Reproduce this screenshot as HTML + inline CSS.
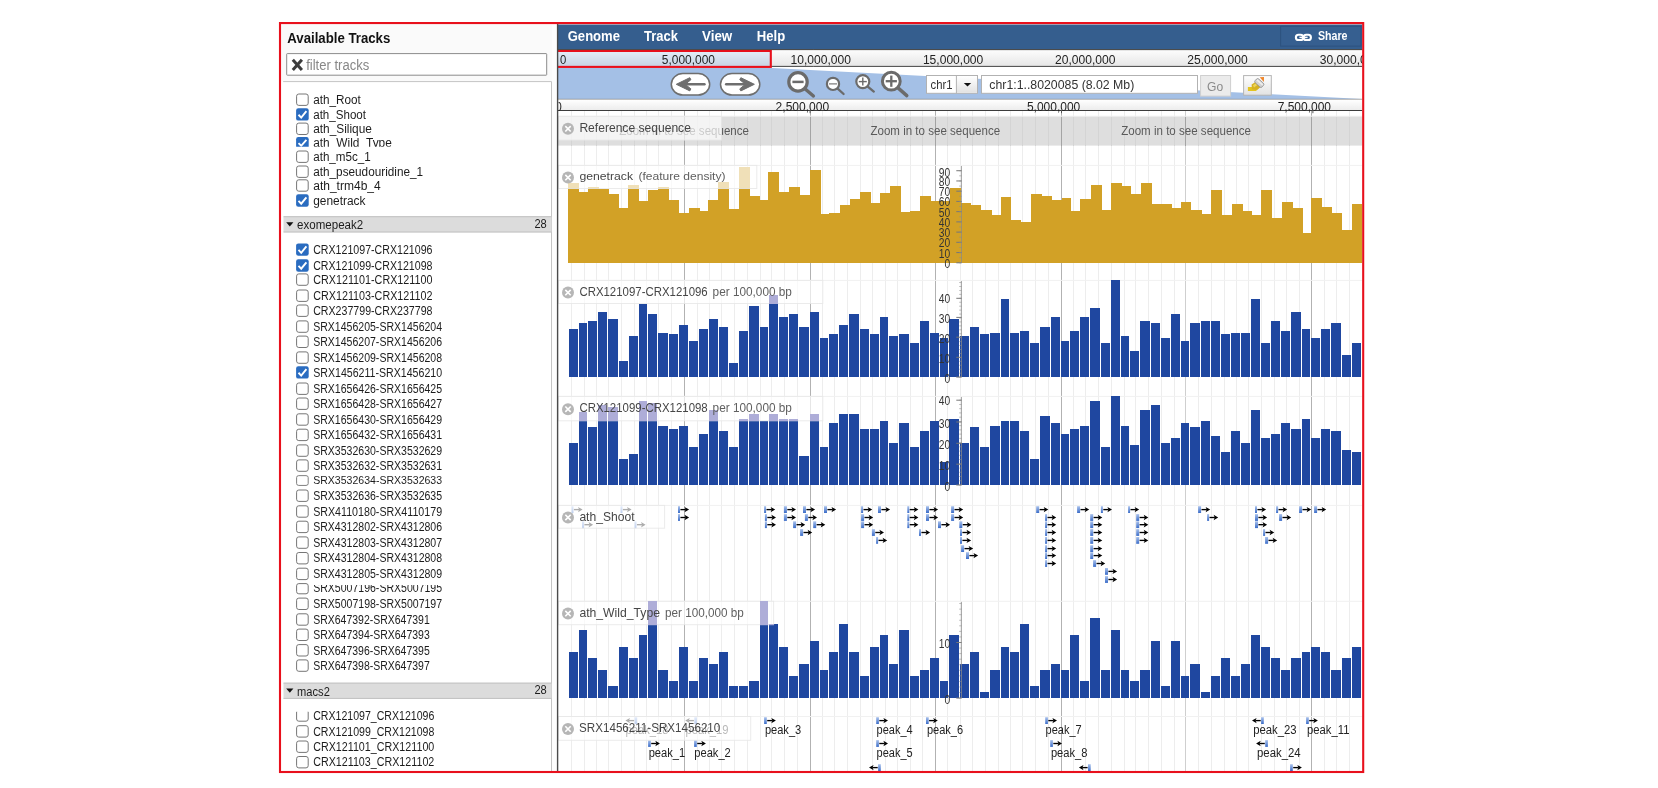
<!DOCTYPE html>
<html lang="en"><head><meta charset="utf-8"><title>JBrowse</title>
<style>
html,body{margin:0;padding:0;background:#fff;overflow:hidden}
body{width:1658px;height:788px}
svg{display:block;position:absolute;left:0;top:0;will-change:transform;-webkit-font-smoothing:antialiased}
svg text{font-family:"Liberation Sans",sans-serif;white-space:pre}
</style></head><body>
<svg width="1658" height="788" viewBox="0 0 1658 788">
<rect x="281" y="24.5" width="277" height="747" fill="#fafafa" />
<text x="287.3" y="43" font-size="14" fill="#111" textLength="103" lengthAdjust="spacingAndGlyphs" font-weight="bold" >Available Tracks</text>
<rect x="286.7" y="53.6" width="260" height="21.6" fill="#fff" stroke="#8c8c8c" stroke-width="1" rx="0.6"/>
<path d="M292.8 59.8 L301.9 70 M301.9 59.8 L292.8 70" stroke="#3c3c3c" stroke-width="3" fill="none"/>
<text x="306.2" y="69.6" font-size="14" fill="#878787" textLength="63" lengthAdjust="spacingAndGlyphs" >filter tracks</text>
<rect x="281" y="81.6" width="270.5" height="690" fill="#fff" />
<line x1="283.2" y1="81.6" x2="551.5" y2="81.6" stroke="#c4c4c4" stroke-width="1" />
<line x1="551.5" y1="81.6" x2="551.5" y2="771.5" stroke="#c4c4c4" stroke-width="1" />
<rect x="296.6" y="94" width="11.6" height="11.4" rx="2.2" fill="#fff" stroke="#767676" stroke-width="1"/>
<text x="313.2" y="103.9" font-size="12" fill="#1c1c1c" textLength="47.57" lengthAdjust="spacingAndGlyphs" >ath_Root</text>
<rect x="296.1" y="108.2" width="12.6" height="12.4" rx="2.2" fill="#2a6cc0"/>
<path d="M298.5 114.77 L301.2 117.62 L306.4 111.18" stroke="#fff" stroke-width="1.9" fill="none"/>
<text x="313.2" y="118.6" font-size="12" fill="#1c1c1c" textLength="52.82" lengthAdjust="spacingAndGlyphs" >ath_Shoot</text>
<rect x="296.6" y="123.1" width="11.6" height="11.4" rx="2.2" fill="#fff" stroke="#767676" stroke-width="1"/>
<text x="313.2" y="133" font-size="12" fill="#1c1c1c" textLength="58.69" lengthAdjust="spacingAndGlyphs" >ath_Silique</text>
<clipPath id="cw"><rect x="290" y="130" width="200" height="16.7"/></clipPath><g clip-path="url(#cw)">
<rect x="296.1" y="137.1" width="12.6" height="11.4" rx="2.2" fill="#2a6cc0"/>
<path d="M298.5 143.14 L301.2 145.76 L306.4 139.84" stroke="#fff" stroke-width="1.9" fill="none"/>
<text x="313.2" y="147.4" font-size="12" fill="#1c1c1c" textLength="78.64" lengthAdjust="spacingAndGlyphs" >ath_Wild_Type</text>
</g>
<rect x="296.6" y="151" width="11.6" height="11.4" rx="2.2" fill="#fff" stroke="#767676" stroke-width="1"/>
<text x="313.2" y="160.9" font-size="12" fill="#1c1c1c" textLength="57.56" lengthAdjust="spacingAndGlyphs" >ath_m5c_1</text>
<rect x="296.6" y="166" width="11.6" height="11.4" rx="2.2" fill="#fff" stroke="#767676" stroke-width="1"/>
<text x="313.2" y="175.9" font-size="12" fill="#1c1c1c" textLength="109.93" lengthAdjust="spacingAndGlyphs" >ath_pseudouridine_1</text>
<rect x="296.6" y="179.8" width="11.6" height="11.4" rx="2.2" fill="#fff" stroke="#767676" stroke-width="1"/>
<text x="313.2" y="189.7" font-size="12" fill="#1c1c1c" textLength="67.53" lengthAdjust="spacingAndGlyphs" >ath_trm4b_4</text>
<rect x="296.1" y="194.3" width="12.6" height="12.4" rx="2.2" fill="#2a6cc0"/>
<path d="M298.5 200.87 L301.2 203.72 L306.4 197.28" stroke="#fff" stroke-width="1.9" fill="none"/>
<text x="313.2" y="204.7" font-size="12" fill="#1c1c1c" textLength="52.34" lengthAdjust="spacingAndGlyphs" >genetrack</text>
<rect x="283.5" y="216.4" width="268" height="15.9" fill="#dcdcdc" />
<line x1="283.5" y1="216.7" x2="551.5" y2="216.7" stroke="#c0c0c0" stroke-width="1" />
<line x1="283.5" y1="232" x2="551.5" y2="232" stroke="#c0c0c0" stroke-width="1" />
<path d="M286.2 222.2 h7.2 l-3.6 4.2 z" fill="#111"/>
<text x="297.1" y="228.7" font-size="12" fill="#1c1c1c" textLength="66.06" lengthAdjust="spacingAndGlyphs" >exomepeak2</text>
<text x="546.8" y="228.1" font-size="12" fill="#1c1c1c" textLength="12.34" lengthAdjust="spacingAndGlyphs" text-anchor="end" >28</text>
<rect x="296.1" y="243.4" width="12.6" height="12.4" rx="2.2" fill="#2a6cc0"/>
<path d="M298.5 249.97 L301.2 252.82 L306.4 246.38" stroke="#fff" stroke-width="1.9" fill="none"/>
<text x="313.2" y="253.8" font-size="12" fill="#1c1c1c" textLength="119.28" lengthAdjust="spacingAndGlyphs" >CRX121097-CRX121096</text>
<rect x="296.1" y="259.3" width="12.6" height="12.4" rx="2.2" fill="#2a6cc0"/>
<path d="M298.5 265.87 L301.2 268.72 L306.4 262.28" stroke="#fff" stroke-width="1.9" fill="none"/>
<text x="313.2" y="269.7" font-size="12" fill="#1c1c1c" textLength="119.28" lengthAdjust="spacingAndGlyphs" >CRX121099-CRX121098</text>
<rect x="296.6" y="273.9" width="11.6" height="11.4" rx="2.2" fill="#fff" stroke="#767676" stroke-width="1"/>
<text x="313.2" y="283.8" font-size="12" fill="#1c1c1c" textLength="119.28" lengthAdjust="spacingAndGlyphs" >CRX121101-CRX121100</text>
<rect x="296.6" y="290" width="11.6" height="11.4" rx="2.2" fill="#fff" stroke="#767676" stroke-width="1"/>
<text x="313.2" y="299.9" font-size="12" fill="#1c1c1c" textLength="119.28" lengthAdjust="spacingAndGlyphs" >CRX121103-CRX121102</text>
<rect x="296.6" y="305" width="11.6" height="11.4" rx="2.2" fill="#fff" stroke="#767676" stroke-width="1"/>
<text x="313.2" y="314.9" font-size="12" fill="#1c1c1c" textLength="119.28" lengthAdjust="spacingAndGlyphs" >CRX237799-CRX237798</text>
<rect x="296.6" y="320.9" width="11.6" height="11.4" rx="2.2" fill="#fff" stroke="#767676" stroke-width="1"/>
<text x="313.2" y="330.8" font-size="12" fill="#1c1c1c" textLength="128.88" lengthAdjust="spacingAndGlyphs" >SRX1456205-SRX1456204</text>
<rect x="296.6" y="336.1" width="11.6" height="11.4" rx="2.2" fill="#fff" stroke="#767676" stroke-width="1"/>
<text x="313.2" y="346" font-size="12" fill="#1c1c1c" textLength="128.88" lengthAdjust="spacingAndGlyphs" >SRX1456207-SRX1456206</text>
<rect x="296.6" y="351.9" width="11.6" height="11.4" rx="2.2" fill="#fff" stroke="#767676" stroke-width="1"/>
<text x="313.2" y="361.8" font-size="12" fill="#1c1c1c" textLength="128.88" lengthAdjust="spacingAndGlyphs" >SRX1456209-SRX1456208</text>
<rect x="296.1" y="366.2" width="12.6" height="12.4" rx="2.2" fill="#2a6cc0"/>
<path d="M298.5 372.77 L301.2 375.62 L306.4 369.18" stroke="#fff" stroke-width="1.9" fill="none"/>
<text x="313.2" y="376.6" font-size="12" fill="#1c1c1c" textLength="128.88" lengthAdjust="spacingAndGlyphs" >SRX1456211-SRX1456210</text>
<rect x="296.6" y="383" width="11.6" height="11.4" rx="2.2" fill="#fff" stroke="#767676" stroke-width="1"/>
<text x="313.2" y="392.9" font-size="12" fill="#1c1c1c" textLength="128.88" lengthAdjust="spacingAndGlyphs" >SRX1656426-SRX1656425</text>
<rect x="296.6" y="398" width="11.6" height="11.4" rx="2.2" fill="#fff" stroke="#767676" stroke-width="1"/>
<text x="313.2" y="407.9" font-size="12" fill="#1c1c1c" textLength="128.88" lengthAdjust="spacingAndGlyphs" >SRX1656428-SRX1656427</text>
<rect x="296.6" y="413.8" width="11.6" height="11.4" rx="2.2" fill="#fff" stroke="#767676" stroke-width="1"/>
<text x="313.2" y="423.7" font-size="12" fill="#1c1c1c" textLength="128.88" lengthAdjust="spacingAndGlyphs" >SRX1656430-SRX1656429</text>
<rect x="296.6" y="429.2" width="11.6" height="11.4" rx="2.2" fill="#fff" stroke="#767676" stroke-width="1"/>
<text x="313.2" y="439.1" font-size="12" fill="#1c1c1c" textLength="128.88" lengthAdjust="spacingAndGlyphs" >SRX1656432-SRX1656431</text>
<rect x="296.6" y="444.9" width="11.6" height="11.4" rx="2.2" fill="#fff" stroke="#767676" stroke-width="1"/>
<text x="313.2" y="454.8" font-size="12" fill="#1c1c1c" textLength="128.88" lengthAdjust="spacingAndGlyphs" >SRX3532630-SRX3532629</text>
<rect x="296.6" y="459.9" width="11.6" height="11.4" rx="2.2" fill="#fff" stroke="#767676" stroke-width="1"/>
<text x="313.2" y="469.8" font-size="12" fill="#1c1c1c" textLength="128.88" lengthAdjust="spacingAndGlyphs" >SRX3532632-SRX3532631</text>
<g transform="translate(0,475.2) scale(1,0.86) translate(0,-475.2)">
<rect x="296.6" y="475.7" width="11.6" height="11.4" rx="2.2" fill="#fff" stroke="#767676" stroke-width="1"/>
<text x="313.2" y="485.6" font-size="12" fill="#1c1c1c" textLength="128.88" lengthAdjust="spacingAndGlyphs" >SRX3532634-SRX3532633</text>
</g>
<rect x="296.6" y="490" width="11.6" height="11.4" rx="2.2" fill="#fff" stroke="#767676" stroke-width="1"/>
<text x="313.2" y="499.9" font-size="12" fill="#1c1c1c" textLength="128.88" lengthAdjust="spacingAndGlyphs" >SRX3532636-SRX3532635</text>
<rect x="296.6" y="505.8" width="11.6" height="11.4" rx="2.2" fill="#fff" stroke="#767676" stroke-width="1"/>
<text x="313.2" y="515.7" font-size="12" fill="#1c1c1c" textLength="128.88" lengthAdjust="spacingAndGlyphs" >SRX4110180-SRX4110179</text>
<rect x="296.6" y="521.2" width="11.6" height="11.4" rx="2.2" fill="#fff" stroke="#767676" stroke-width="1"/>
<text x="313.2" y="531.1" font-size="12" fill="#1c1c1c" textLength="128.88" lengthAdjust="spacingAndGlyphs" >SRX4312802-SRX4312806</text>
<rect x="296.6" y="536.9" width="11.6" height="11.4" rx="2.2" fill="#fff" stroke="#767676" stroke-width="1"/>
<text x="313.2" y="546.8" font-size="12" fill="#1c1c1c" textLength="128.88" lengthAdjust="spacingAndGlyphs" >SRX4312803-SRX4312807</text>
<rect x="296.6" y="552.5" width="11.6" height="11.4" rx="2.2" fill="#fff" stroke="#767676" stroke-width="1"/>
<text x="313.2" y="562.4" font-size="12" fill="#1c1c1c" textLength="128.88" lengthAdjust="spacingAndGlyphs" >SRX4312804-SRX4312808</text>
<rect x="296.6" y="568.2" width="11.6" height="11.4" rx="2.2" fill="#fff" stroke="#767676" stroke-width="1"/>
<text x="313.2" y="578.1" font-size="12" fill="#1c1c1c" textLength="128.88" lengthAdjust="spacingAndGlyphs" >SRX4312805-SRX4312809</text>
<rect x="296.6" y="583.6" width="11.6" height="10.2" rx="2.2" fill="#fff" stroke="#767676" stroke-width="1"/>
<clipPath id="c5"><rect x="290" y="585" width="200" height="12"/></clipPath><g clip-path="url(#c5)">
<text x="313.2" y="591.7" font-size="12" fill="#1c1c1c" textLength="128.88" lengthAdjust="spacingAndGlyphs" >SRX5007196-SRX5007195</text>
</g>
<rect x="296.6" y="598.1" width="11.6" height="11.4" rx="2.2" fill="#fff" stroke="#767676" stroke-width="1"/>
<text x="313.2" y="608" font-size="12" fill="#1c1c1c" textLength="128.88" lengthAdjust="spacingAndGlyphs" >SRX5007198-SRX5007197</text>
<rect x="296.6" y="613.8" width="11.6" height="11.4" rx="2.2" fill="#fff" stroke="#767676" stroke-width="1"/>
<text x="313.2" y="623.7" font-size="12" fill="#1c1c1c" textLength="116.53" lengthAdjust="spacingAndGlyphs" >SRX647392-SRX647391</text>
<rect x="296.6" y="629.1" width="11.6" height="11.4" rx="2.2" fill="#fff" stroke="#767676" stroke-width="1"/>
<text x="313.2" y="639" font-size="12" fill="#1c1c1c" textLength="116.53" lengthAdjust="spacingAndGlyphs" >SRX647394-SRX647393</text>
<rect x="296.6" y="644.6" width="11.6" height="11.4" rx="2.2" fill="#fff" stroke="#767676" stroke-width="1"/>
<text x="313.2" y="654.5" font-size="12" fill="#1c1c1c" textLength="116.53" lengthAdjust="spacingAndGlyphs" >SRX647396-SRX647395</text>
<rect x="296.6" y="659.9" width="11.6" height="11.4" rx="2.2" fill="#fff" stroke="#767676" stroke-width="1"/>
<text x="313.2" y="669.8" font-size="12" fill="#1c1c1c" textLength="116.53" lengthAdjust="spacingAndGlyphs" >SRX647398-SRX647397</text>
<rect x="283.5" y="682.8" width="268" height="15.9" fill="#dcdcdc" />
<line x1="283.5" y1="683.1" x2="551.5" y2="683.1" stroke="#c0c0c0" stroke-width="1" />
<line x1="283.5" y1="698.4" x2="551.5" y2="698.4" stroke="#c0c0c0" stroke-width="1" />
<path d="M286.2 688.6 h7.2 l-3.6 4.2 z" fill="#111"/>
<text x="297.1" y="696" font-size="12" fill="#1c1c1c" textLength="32.72" lengthAdjust="spacingAndGlyphs" >macs2</text>
<text x="546.8" y="694.1" font-size="12" fill="#1c1c1c" textLength="12.34" lengthAdjust="spacingAndGlyphs" text-anchor="end" >28</text>
<clipPath id="c6"><rect x="290" y="711.8" width="200" height="30"/></clipPath>
<g clip-path="url(#c6)">
<rect x="296.6" y="709.8" width="11.6" height="11.4" rx="2.2" fill="#fff" stroke="#767676" stroke-width="1"/>
</g>
<text x="313.2" y="719.9" font-size="12" fill="#1c1c1c" textLength="121.14" lengthAdjust="spacingAndGlyphs" >CRX121097_CRX121096</text>
<rect x="296.6" y="725.7" width="11.6" height="11.4" rx="2.2" fill="#fff" stroke="#767676" stroke-width="1"/>
<text x="313.2" y="735.6" font-size="12" fill="#1c1c1c" textLength="121.14" lengthAdjust="spacingAndGlyphs" >CRX121099_CRX121098</text>
<rect x="296.6" y="741" width="11.6" height="11.4" rx="2.2" fill="#fff" stroke="#767676" stroke-width="1"/>
<text x="313.2" y="750.9" font-size="12" fill="#1c1c1c" textLength="121.14" lengthAdjust="spacingAndGlyphs" >CRX121101_CRX121100</text>
<rect x="296.6" y="756.5" width="11.6" height="11.4" rx="2.2" fill="#fff" stroke="#767676" stroke-width="1"/>
<text x="313.2" y="766.4" font-size="12" fill="#1c1c1c" textLength="121.14" lengthAdjust="spacingAndGlyphs" >CRX121103_CRX121102</text>
<rect x="552" y="24.5" width="5.6" height="747" fill="#fdfdfd" />
<rect x="557.6" y="99" width="804.6" height="672.5" fill="#fff" />
<g shape-rendering="crispEdges">
<line x1="571.5" y1="110.5" x2="571.5" y2="771.5" stroke="#ededed" stroke-width="1" />
<line x1="584.5" y1="110.5" x2="584.5" y2="771.5" stroke="#ededed" stroke-width="1" />
<line x1="596.5" y1="110.5" x2="596.5" y2="771.5" stroke="#ededed" stroke-width="1" />
<line x1="608.5" y1="110.5" x2="608.5" y2="771.5" stroke="#ededed" stroke-width="1" />
<line x1="621.5" y1="110.5" x2="621.5" y2="771.5" stroke="#ededed" stroke-width="1" />
<line x1="634.5" y1="110.5" x2="634.5" y2="771.5" stroke="#ededed" stroke-width="1" />
<line x1="646.5" y1="110.5" x2="646.5" y2="771.5" stroke="#ededed" stroke-width="1" />
<line x1="658.5" y1="110.5" x2="658.5" y2="771.5" stroke="#ededed" stroke-width="1" />
<line x1="671.5" y1="110.5" x2="671.5" y2="771.5" stroke="#ededed" stroke-width="1" />
<line x1="684.5" y1="110.5" x2="684.5" y2="771.5" stroke="#b2b2b2" stroke-width="1" />
<line x1="697.5" y1="110.5" x2="697.5" y2="771.5" stroke="#ededed" stroke-width="1" />
<line x1="709.5" y1="110.5" x2="709.5" y2="771.5" stroke="#ededed" stroke-width="1" />
<line x1="721.5" y1="110.5" x2="721.5" y2="771.5" stroke="#ededed" stroke-width="1" />
<line x1="734.5" y1="110.5" x2="734.5" y2="771.5" stroke="#ededed" stroke-width="1" />
<line x1="747.5" y1="110.5" x2="747.5" y2="771.5" stroke="#ededed" stroke-width="1" />
<line x1="760.5" y1="110.5" x2="760.5" y2="771.5" stroke="#ededed" stroke-width="1" />
<line x1="771.5" y1="110.5" x2="771.5" y2="771.5" stroke="#ededed" stroke-width="1" />
<line x1="784.5" y1="110.5" x2="784.5" y2="771.5" stroke="#ededed" stroke-width="1" />
<line x1="797.5" y1="110.5" x2="797.5" y2="771.5" stroke="#ededed" stroke-width="1" />
<line x1="810.5" y1="110.5" x2="810.5" y2="771.5" stroke="#b2b2b2" stroke-width="1" />
<line x1="822.5" y1="110.5" x2="822.5" y2="771.5" stroke="#ededed" stroke-width="1" />
<line x1="834.5" y1="110.5" x2="834.5" y2="771.5" stroke="#ededed" stroke-width="1" />
<line x1="847.5" y1="110.5" x2="847.5" y2="771.5" stroke="#ededed" stroke-width="1" />
<line x1="860.5" y1="110.5" x2="860.5" y2="771.5" stroke="#ededed" stroke-width="1" />
<line x1="872.5" y1="110.5" x2="872.5" y2="771.5" stroke="#ededed" stroke-width="1" />
<line x1="885.5" y1="110.5" x2="885.5" y2="771.5" stroke="#ededed" stroke-width="1" />
<line x1="897.5" y1="110.5" x2="897.5" y2="771.5" stroke="#ededed" stroke-width="1" />
<line x1="910.5" y1="110.5" x2="910.5" y2="771.5" stroke="#ededed" stroke-width="1" />
<line x1="922.5" y1="110.5" x2="922.5" y2="771.5" stroke="#ededed" stroke-width="1" />
<line x1="935.5" y1="110.5" x2="935.5" y2="771.5" stroke="#b2b2b2" stroke-width="1" />
<line x1="947.5" y1="110.5" x2="947.5" y2="771.5" stroke="#ededed" stroke-width="1" />
<line x1="960.5" y1="110.5" x2="960.5" y2="771.5" stroke="#ededed" stroke-width="1" />
<line x1="972.5" y1="110.5" x2="972.5" y2="771.5" stroke="#ededed" stroke-width="1" />
<line x1="985.5" y1="110.5" x2="985.5" y2="771.5" stroke="#ededed" stroke-width="1" />
<line x1="998.5" y1="110.5" x2="998.5" y2="771.5" stroke="#ededed" stroke-width="1" />
<line x1="1010.5" y1="110.5" x2="1010.5" y2="771.5" stroke="#ededed" stroke-width="1" />
<line x1="1022.5" y1="110.5" x2="1022.5" y2="771.5" stroke="#ededed" stroke-width="1" />
<line x1="1035.5" y1="110.5" x2="1035.5" y2="771.5" stroke="#ededed" stroke-width="1" />
<line x1="1048.5" y1="110.5" x2="1048.5" y2="771.5" stroke="#ededed" stroke-width="1" />
<line x1="1061.5" y1="110.5" x2="1061.5" y2="771.5" stroke="#b2b2b2" stroke-width="1" />
<line x1="1073.5" y1="110.5" x2="1073.5" y2="771.5" stroke="#ededed" stroke-width="1" />
<line x1="1085.5" y1="110.5" x2="1085.5" y2="771.5" stroke="#ededed" stroke-width="1" />
<line x1="1098.5" y1="110.5" x2="1098.5" y2="771.5" stroke="#ededed" stroke-width="1" />
<line x1="1111.5" y1="110.5" x2="1111.5" y2="771.5" stroke="#ededed" stroke-width="1" />
<line x1="1124.5" y1="110.5" x2="1124.5" y2="771.5" stroke="#ededed" stroke-width="1" />
<line x1="1135.5" y1="110.5" x2="1135.5" y2="771.5" stroke="#ededed" stroke-width="1" />
<line x1="1148.5" y1="110.5" x2="1148.5" y2="771.5" stroke="#ededed" stroke-width="1" />
<line x1="1161.5" y1="110.5" x2="1161.5" y2="771.5" stroke="#ededed" stroke-width="1" />
<line x1="1174.5" y1="110.5" x2="1174.5" y2="771.5" stroke="#ededed" stroke-width="1" />
<line x1="1185.5" y1="110.5" x2="1185.5" y2="771.5" stroke="#cfcfcf" stroke-width="1" />
<line x1="1198.5" y1="110.5" x2="1198.5" y2="771.5" stroke="#ededed" stroke-width="1" />
<line x1="1211.5" y1="110.5" x2="1211.5" y2="771.5" stroke="#ededed" stroke-width="1" />
<line x1="1224.5" y1="110.5" x2="1224.5" y2="771.5" stroke="#ededed" stroke-width="1" />
<line x1="1236.5" y1="110.5" x2="1236.5" y2="771.5" stroke="#ededed" stroke-width="1" />
<line x1="1248.5" y1="110.5" x2="1248.5" y2="771.5" stroke="#ededed" stroke-width="1" />
<line x1="1261.5" y1="110.5" x2="1261.5" y2="771.5" stroke="#ededed" stroke-width="1" />
<line x1="1274.5" y1="110.5" x2="1274.5" y2="771.5" stroke="#ededed" stroke-width="1" />
<line x1="1286.5" y1="110.5" x2="1286.5" y2="771.5" stroke="#ededed" stroke-width="1" />
<line x1="1299.5" y1="110.5" x2="1299.5" y2="771.5" stroke="#ededed" stroke-width="1" />
<line x1="1311.5" y1="110.5" x2="1311.5" y2="771.5" stroke="#b2b2b2" stroke-width="1" />
<line x1="1324.5" y1="110.5" x2="1324.5" y2="771.5" stroke="#ededed" stroke-width="1" />
<line x1="1336.5" y1="110.5" x2="1336.5" y2="771.5" stroke="#ededed" stroke-width="1" />
<line x1="1349.5" y1="110.5" x2="1349.5" y2="771.5" stroke="#ededed" stroke-width="1" />
</g>
<line x1="557.6" y1="116.2" x2="1362.2" y2="116.2" stroke="#f1f1f1" stroke-width="1" />
<line x1="557.6" y1="165.4" x2="1362.2" y2="165.4" stroke="#f1f1f1" stroke-width="1" />
<line x1="557.6" y1="280.4" x2="1362.2" y2="280.4" stroke="#f1f1f1" stroke-width="1" />
<line x1="557.6" y1="396.4" x2="1362.2" y2="396.4" stroke="#f1f1f1" stroke-width="1" />
<line x1="557.6" y1="505.4" x2="1362.2" y2="505.4" stroke="#f1f1f1" stroke-width="1" />
<line x1="557.6" y1="601.3" x2="1362.2" y2="601.3" stroke="#f1f1f1" stroke-width="1" />
<line x1="557.6" y1="716.5" x2="1362.2" y2="716.5" stroke="#f1f1f1" stroke-width="1" />
<rect x="557.6" y="116.6" width="804.6" height="29" fill="#dedede" />
<g shape-rendering="crispEdges">
<line x1="571.5" y1="116.6" x2="571.5" y2="145.6" stroke="#d4d4d4" stroke-width="1" />
<line x1="584.5" y1="116.6" x2="584.5" y2="145.6" stroke="#d4d4d4" stroke-width="1" />
<line x1="596.5" y1="116.6" x2="596.5" y2="145.6" stroke="#d4d4d4" stroke-width="1" />
<line x1="608.5" y1="116.6" x2="608.5" y2="145.6" stroke="#d4d4d4" stroke-width="1" />
<line x1="621.5" y1="116.6" x2="621.5" y2="145.6" stroke="#d4d4d4" stroke-width="1" />
<line x1="634.5" y1="116.6" x2="634.5" y2="145.6" stroke="#d4d4d4" stroke-width="1" />
<line x1="646.5" y1="116.6" x2="646.5" y2="145.6" stroke="#d4d4d4" stroke-width="1" />
<line x1="658.5" y1="116.6" x2="658.5" y2="145.6" stroke="#d4d4d4" stroke-width="1" />
<line x1="671.5" y1="116.6" x2="671.5" y2="145.6" stroke="#d4d4d4" stroke-width="1" />
<line x1="684.5" y1="116.6" x2="684.5" y2="145.6" stroke="#a4a4a4" stroke-width="1" />
<line x1="697.5" y1="116.6" x2="697.5" y2="145.6" stroke="#d4d4d4" stroke-width="1" />
<line x1="709.5" y1="116.6" x2="709.5" y2="145.6" stroke="#d4d4d4" stroke-width="1" />
<line x1="721.5" y1="116.6" x2="721.5" y2="145.6" stroke="#d4d4d4" stroke-width="1" />
<line x1="734.5" y1="116.6" x2="734.5" y2="145.6" stroke="#d4d4d4" stroke-width="1" />
<line x1="747.5" y1="116.6" x2="747.5" y2="145.6" stroke="#d4d4d4" stroke-width="1" />
<line x1="760.5" y1="116.6" x2="760.5" y2="145.6" stroke="#d4d4d4" stroke-width="1" />
<line x1="771.5" y1="116.6" x2="771.5" y2="145.6" stroke="#d4d4d4" stroke-width="1" />
<line x1="784.5" y1="116.6" x2="784.5" y2="145.6" stroke="#d4d4d4" stroke-width="1" />
<line x1="797.5" y1="116.6" x2="797.5" y2="145.6" stroke="#d4d4d4" stroke-width="1" />
<line x1="810.5" y1="116.6" x2="810.5" y2="145.6" stroke="#a4a4a4" stroke-width="1" />
<line x1="822.5" y1="116.6" x2="822.5" y2="145.6" stroke="#d4d4d4" stroke-width="1" />
<line x1="834.5" y1="116.6" x2="834.5" y2="145.6" stroke="#d4d4d4" stroke-width="1" />
<line x1="847.5" y1="116.6" x2="847.5" y2="145.6" stroke="#d4d4d4" stroke-width="1" />
<line x1="860.5" y1="116.6" x2="860.5" y2="145.6" stroke="#d4d4d4" stroke-width="1" />
<line x1="872.5" y1="116.6" x2="872.5" y2="145.6" stroke="#d4d4d4" stroke-width="1" />
<line x1="885.5" y1="116.6" x2="885.5" y2="145.6" stroke="#d4d4d4" stroke-width="1" />
<line x1="897.5" y1="116.6" x2="897.5" y2="145.6" stroke="#d4d4d4" stroke-width="1" />
<line x1="910.5" y1="116.6" x2="910.5" y2="145.6" stroke="#d4d4d4" stroke-width="1" />
<line x1="922.5" y1="116.6" x2="922.5" y2="145.6" stroke="#d4d4d4" stroke-width="1" />
<line x1="935.5" y1="116.6" x2="935.5" y2="145.6" stroke="#a4a4a4" stroke-width="1" />
<line x1="947.5" y1="116.6" x2="947.5" y2="145.6" stroke="#d4d4d4" stroke-width="1" />
<line x1="960.5" y1="116.6" x2="960.5" y2="145.6" stroke="#d4d4d4" stroke-width="1" />
<line x1="972.5" y1="116.6" x2="972.5" y2="145.6" stroke="#d4d4d4" stroke-width="1" />
<line x1="985.5" y1="116.6" x2="985.5" y2="145.6" stroke="#d4d4d4" stroke-width="1" />
<line x1="998.5" y1="116.6" x2="998.5" y2="145.6" stroke="#d4d4d4" stroke-width="1" />
<line x1="1010.5" y1="116.6" x2="1010.5" y2="145.6" stroke="#d4d4d4" stroke-width="1" />
<line x1="1022.5" y1="116.6" x2="1022.5" y2="145.6" stroke="#d4d4d4" stroke-width="1" />
<line x1="1035.5" y1="116.6" x2="1035.5" y2="145.6" stroke="#d4d4d4" stroke-width="1" />
<line x1="1048.5" y1="116.6" x2="1048.5" y2="145.6" stroke="#d4d4d4" stroke-width="1" />
<line x1="1061.5" y1="116.6" x2="1061.5" y2="145.6" stroke="#a4a4a4" stroke-width="1" />
<line x1="1073.5" y1="116.6" x2="1073.5" y2="145.6" stroke="#d4d4d4" stroke-width="1" />
<line x1="1085.5" y1="116.6" x2="1085.5" y2="145.6" stroke="#d4d4d4" stroke-width="1" />
<line x1="1098.5" y1="116.6" x2="1098.5" y2="145.6" stroke="#d4d4d4" stroke-width="1" />
<line x1="1111.5" y1="116.6" x2="1111.5" y2="145.6" stroke="#d4d4d4" stroke-width="1" />
<line x1="1124.5" y1="116.6" x2="1124.5" y2="145.6" stroke="#d4d4d4" stroke-width="1" />
<line x1="1135.5" y1="116.6" x2="1135.5" y2="145.6" stroke="#d4d4d4" stroke-width="1" />
<line x1="1148.5" y1="116.6" x2="1148.5" y2="145.6" stroke="#d4d4d4" stroke-width="1" />
<line x1="1161.5" y1="116.6" x2="1161.5" y2="145.6" stroke="#d4d4d4" stroke-width="1" />
<line x1="1174.5" y1="116.6" x2="1174.5" y2="145.6" stroke="#d4d4d4" stroke-width="1" />
<line x1="1185.5" y1="116.6" x2="1185.5" y2="145.6" stroke="#a4a4a4" stroke-width="1" />
<line x1="1198.5" y1="116.6" x2="1198.5" y2="145.6" stroke="#d4d4d4" stroke-width="1" />
<line x1="1211.5" y1="116.6" x2="1211.5" y2="145.6" stroke="#d4d4d4" stroke-width="1" />
<line x1="1224.5" y1="116.6" x2="1224.5" y2="145.6" stroke="#d4d4d4" stroke-width="1" />
<line x1="1236.5" y1="116.6" x2="1236.5" y2="145.6" stroke="#d4d4d4" stroke-width="1" />
<line x1="1248.5" y1="116.6" x2="1248.5" y2="145.6" stroke="#d4d4d4" stroke-width="1" />
<line x1="1261.5" y1="116.6" x2="1261.5" y2="145.6" stroke="#d4d4d4" stroke-width="1" />
<line x1="1274.5" y1="116.6" x2="1274.5" y2="145.6" stroke="#d4d4d4" stroke-width="1" />
<line x1="1286.5" y1="116.6" x2="1286.5" y2="145.6" stroke="#d4d4d4" stroke-width="1" />
<line x1="1299.5" y1="116.6" x2="1299.5" y2="145.6" stroke="#d4d4d4" stroke-width="1" />
<line x1="1311.5" y1="116.6" x2="1311.5" y2="145.6" stroke="#a4a4a4" stroke-width="1" />
<line x1="1324.5" y1="116.6" x2="1324.5" y2="145.6" stroke="#d4d4d4" stroke-width="1" />
<line x1="1336.5" y1="116.6" x2="1336.5" y2="145.6" stroke="#d4d4d4" stroke-width="1" />
<line x1="1349.5" y1="116.6" x2="1349.5" y2="145.6" stroke="#d4d4d4" stroke-width="1" />
</g>
<text x="684.1" y="135" font-size="12" fill="#5a5a5a" textLength="129.8" lengthAdjust="spacingAndGlyphs" text-anchor="middle" >Zoom in to see sequence</text>
<text x="935.3" y="135" font-size="12" fill="#5a5a5a" textLength="129.8" lengthAdjust="spacingAndGlyphs" text-anchor="middle" >Zoom in to see sequence</text>
<text x="1186.1" y="135" font-size="12" fill="#5a5a5a" textLength="129.8" lengthAdjust="spacingAndGlyphs" text-anchor="middle" >Zoom in to see sequence</text>
<g shape-rendering="crispEdges">
<rect x="568" y="183" width="11" height="80" fill="#d2a126" />
<rect x="579" y="192" width="9" height="71" fill="#d2a126" />
<rect x="588" y="187" width="11" height="76" fill="#d2a126" />
<rect x="599" y="189" width="10" height="74" fill="#d2a126" />
<rect x="609" y="194" width="10" height="69" fill="#d2a126" />
<rect x="619" y="208" width="9" height="55" fill="#d2a126" />
<rect x="628" y="185" width="11" height="78" fill="#d2a126" />
<rect x="639" y="201" width="9" height="62" fill="#d2a126" />
<rect x="648" y="190" width="10" height="73" fill="#d2a126" />
<rect x="658" y="187" width="11" height="76" fill="#d2a126" />
<rect x="669" y="200" width="10" height="63" fill="#d2a126" />
<rect x="679" y="213" width="10" height="50" fill="#d2a126" />
<rect x="689" y="208" width="11" height="55" fill="#d2a126" />
<rect x="700" y="211" width="8" height="52" fill="#d2a126" />
<rect x="708" y="200" width="10" height="63" fill="#d2a126" />
<rect x="718" y="182" width="11" height="81" fill="#d2a126" />
<rect x="729" y="209" width="10" height="54" fill="#d2a126" />
<rect x="739" y="167" width="11" height="96" fill="#d2a126" />
<rect x="750" y="196" width="10" height="67" fill="#d2a126" />
<rect x="760" y="200" width="8" height="63" fill="#d2a126" />
<rect x="768" y="172" width="11" height="91" fill="#d2a126" />
<rect x="779" y="192" width="10" height="71" fill="#d2a126" />
<rect x="789" y="187" width="11" height="76" fill="#d2a126" />
<rect x="800" y="195" width="10" height="68" fill="#d2a126" />
<rect x="810" y="170" width="11" height="93" fill="#d2a126" />
<rect x="821" y="214" width="8" height="49" fill="#d2a126" />
<rect x="829" y="213" width="11" height="50" fill="#d2a126" />
<rect x="840" y="205" width="10" height="58" fill="#d2a126" />
<rect x="850" y="199" width="10" height="64" fill="#d2a126" />
<rect x="860" y="192" width="11" height="71" fill="#d2a126" />
<rect x="871" y="203" width="9" height="60" fill="#d2a126" />
<rect x="880" y="193" width="10" height="70" fill="#d2a126" />
<rect x="890" y="186" width="11" height="77" fill="#d2a126" />
<rect x="901" y="212" width="9" height="51" fill="#d2a126" />
<rect x="910" y="211" width="10" height="52" fill="#d2a126" />
<rect x="920" y="196" width="11" height="67" fill="#d2a126" />
<rect x="931" y="201" width="9" height="62" fill="#d2a126" />
<rect x="940" y="201" width="10" height="62" fill="#d2a126" />
<rect x="950" y="188" width="11" height="75" fill="#d2a126" />
<rect x="961" y="203" width="10" height="60" fill="#d2a126" />
<rect x="971" y="205" width="10" height="58" fill="#d2a126" />
<rect x="981" y="210" width="11" height="53" fill="#d2a126" />
<rect x="992" y="215" width="9" height="48" fill="#d2a126" />
<rect x="1001" y="197" width="10" height="66" fill="#d2a126" />
<rect x="1011" y="220" width="10" height="43" fill="#d2a126" />
<rect x="1021" y="222" width="10" height="41" fill="#d2a126" />
<rect x="1031" y="194" width="11" height="69" fill="#d2a126" />
<rect x="1042" y="196" width="10" height="67" fill="#d2a126" />
<rect x="1052" y="200" width="10" height="63" fill="#d2a126" />
<rect x="1062" y="198" width="9" height="65" fill="#d2a126" />
<rect x="1071" y="211" width="9" height="52" fill="#d2a126" />
<rect x="1080" y="199" width="11" height="64" fill="#d2a126" />
<rect x="1091" y="185" width="11" height="78" fill="#d2a126" />
<rect x="1102" y="210" width="9" height="53" fill="#d2a126" />
<rect x="1111" y="183" width="11" height="80" fill="#d2a126" />
<rect x="1122" y="186" width="9" height="77" fill="#d2a126" />
<rect x="1131" y="194" width="10" height="69" fill="#d2a126" />
<rect x="1141" y="183" width="11" height="80" fill="#d2a126" />
<rect x="1152" y="204" width="10" height="59" fill="#d2a126" />
<rect x="1162" y="204" width="10" height="59" fill="#d2a126" />
<rect x="1172" y="208" width="9" height="55" fill="#d2a126" />
<rect x="1181" y="202" width="10" height="61" fill="#d2a126" />
<rect x="1191" y="210" width="11" height="53" fill="#d2a126" />
<rect x="1202" y="214" width="9" height="49" fill="#d2a126" />
<rect x="1211" y="190" width="11" height="73" fill="#d2a126" />
<rect x="1222" y="215" width="10" height="48" fill="#d2a126" />
<rect x="1232" y="204" width="11" height="59" fill="#d2a126" />
<rect x="1243" y="211" width="9" height="52" fill="#d2a126" />
<rect x="1252" y="215" width="9" height="48" fill="#d2a126" />
<rect x="1261" y="190" width="11" height="73" fill="#d2a126" />
<rect x="1272" y="218" width="10" height="45" fill="#d2a126" />
<rect x="1282" y="202" width="11" height="61" fill="#d2a126" />
<rect x="1293" y="208" width="10" height="55" fill="#d2a126" />
<rect x="1303" y="233" width="8" height="30" fill="#d2a126" />
<rect x="1311" y="198" width="11" height="65" fill="#d2a126" />
<rect x="1322" y="207" width="10" height="56" fill="#d2a126" />
<rect x="1332" y="213" width="10" height="50" fill="#d2a126" />
<rect x="1342" y="230" width="10" height="33" fill="#d2a126" />
<rect x="1352" y="204" width="10" height="59" fill="#d2a126" />
</g>
<g shape-rendering="crispEdges">
<rect x="569" y="329" width="9" height="48" fill="#1f47a0" />
<rect x="579" y="323" width="8" height="54" fill="#1f47a0" />
<rect x="588" y="321" width="9" height="56" fill="#1f47a0" />
<rect x="598" y="312" width="9" height="65" fill="#1f47a0" />
<rect x="608" y="319" width="10" height="58" fill="#1f47a0" />
<rect x="619" y="361" width="9" height="16" fill="#1f47a0" />
<rect x="629" y="336" width="9" height="41" fill="#1f47a0" />
<rect x="639" y="304" width="8" height="73" fill="#1f47a0" />
<rect x="648" y="314" width="9" height="63" fill="#1f47a0" />
<rect x="658" y="333" width="10" height="44" fill="#1f47a0" />
<rect x="669" y="334" width="9" height="43" fill="#1f47a0" />
<rect x="679" y="325" width="9" height="52" fill="#1f47a0" />
<rect x="689" y="341" width="9" height="36" fill="#1f47a0" />
<rect x="699" y="329" width="9" height="48" fill="#1f47a0" />
<rect x="709" y="319" width="9" height="58" fill="#1f47a0" />
<rect x="719" y="327" width="9" height="50" fill="#1f47a0" />
<rect x="729" y="363" width="9" height="14" fill="#1f47a0" />
<rect x="739" y="331" width="9" height="46" fill="#1f47a0" />
<rect x="749" y="306" width="10" height="71" fill="#1f47a0" />
<rect x="760" y="327" width="8" height="50" fill="#1f47a0" />
<rect x="769" y="295" width="9" height="82" fill="#1f47a0" />
<rect x="779" y="317" width="9" height="60" fill="#1f47a0" />
<rect x="789" y="314" width="9" height="63" fill="#1f47a0" />
<rect x="799" y="327" width="10" height="50" fill="#1f47a0" />
<rect x="810" y="312" width="9" height="65" fill="#1f47a0" />
<rect x="820" y="338" width="8" height="39" fill="#1f47a0" />
<rect x="829" y="334" width="9" height="43" fill="#1f47a0" />
<rect x="839" y="325" width="9" height="52" fill="#1f47a0" />
<rect x="849" y="314" width="10" height="63" fill="#1f47a0" />
<rect x="860" y="329" width="9" height="48" fill="#1f47a0" />
<rect x="870" y="334" width="9" height="43" fill="#1f47a0" />
<rect x="880" y="317" width="8" height="60" fill="#1f47a0" />
<rect x="889" y="336" width="9" height="41" fill="#1f47a0" />
<rect x="899" y="334" width="10" height="43" fill="#1f47a0" />
<rect x="910" y="343" width="9" height="34" fill="#1f47a0" />
<rect x="920" y="321" width="9" height="56" fill="#1f47a0" />
<rect x="930" y="333" width="9" height="44" fill="#1f47a0" />
<rect x="940" y="338" width="8" height="39" fill="#1f47a0" />
<rect x="949" y="319" width="10" height="58" fill="#1f47a0" />
<rect x="960" y="336" width="9" height="41" fill="#1f47a0" />
<rect x="970" y="327" width="9" height="50" fill="#1f47a0" />
<rect x="980" y="334" width="9" height="43" fill="#1f47a0" />
<rect x="990" y="333" width="10" height="44" fill="#1f47a0" />
<rect x="1001" y="299" width="8" height="78" fill="#1f47a0" />
<rect x="1010" y="333" width="9" height="44" fill="#1f47a0" />
<rect x="1020" y="331" width="9" height="46" fill="#1f47a0" />
<rect x="1030" y="343" width="9" height="34" fill="#1f47a0" />
<rect x="1040" y="327" width="10" height="50" fill="#1f47a0" />
<rect x="1051" y="317" width="9" height="60" fill="#1f47a0" />
<rect x="1061" y="341" width="8" height="36" fill="#1f47a0" />
<rect x="1070" y="331" width="9" height="46" fill="#1f47a0" />
<rect x="1080" y="317" width="9" height="60" fill="#1f47a0" />
<rect x="1090" y="308" width="10" height="69" fill="#1f47a0" />
<rect x="1101" y="343" width="9" height="34" fill="#1f47a0" />
<rect x="1111" y="280" width="9" height="97" fill="#1f47a0" />
<rect x="1121" y="336" width="8" height="41" fill="#1f47a0" />
<rect x="1130" y="351" width="9" height="26" fill="#1f47a0" />
<rect x="1140" y="321" width="10" height="56" fill="#1f47a0" />
<rect x="1151" y="323" width="9" height="54" fill="#1f47a0" />
<rect x="1161" y="338" width="9" height="39" fill="#1f47a0" />
<rect x="1171" y="314" width="9" height="63" fill="#1f47a0" />
<rect x="1181" y="341" width="8" height="36" fill="#1f47a0" />
<rect x="1190" y="323" width="10" height="54" fill="#1f47a0" />
<rect x="1201" y="321" width="9" height="56" fill="#1f47a0" />
<rect x="1211" y="321" width="9" height="56" fill="#1f47a0" />
<rect x="1221" y="334" width="9" height="43" fill="#1f47a0" />
<rect x="1231" y="333" width="9" height="44" fill="#1f47a0" />
<rect x="1241" y="333" width="9" height="44" fill="#1f47a0" />
<rect x="1251" y="299" width="9" height="78" fill="#1f47a0" />
<rect x="1261" y="343" width="9" height="34" fill="#1f47a0" />
<rect x="1271" y="321" width="9" height="56" fill="#1f47a0" />
<rect x="1281" y="331" width="9" height="46" fill="#1f47a0" />
<rect x="1291" y="312" width="10" height="65" fill="#1f47a0" />
<rect x="1302" y="329" width="8" height="48" fill="#1f47a0" />
<rect x="1311" y="338" width="9" height="39" fill="#1f47a0" />
<rect x="1321" y="329" width="9" height="48" fill="#1f47a0" />
<rect x="1331" y="323" width="10" height="54" fill="#1f47a0" />
<rect x="1342" y="355" width="9" height="22" fill="#1f47a0" />
<rect x="1352" y="343" width="9" height="34" fill="#1f47a0" />
</g>
<g shape-rendering="crispEdges">
<rect x="569" y="443" width="9" height="42" fill="#1f47a0" />
<rect x="579" y="412" width="8" height="73" fill="#1f47a0" />
<rect x="588" y="427" width="9" height="58" fill="#1f47a0" />
<rect x="598" y="405" width="9" height="80" fill="#1f47a0" />
<rect x="608" y="407" width="10" height="78" fill="#1f47a0" />
<rect x="619" y="459" width="9" height="26" fill="#1f47a0" />
<rect x="629" y="454" width="9" height="31" fill="#1f47a0" />
<rect x="639" y="401" width="8" height="84" fill="#1f47a0" />
<rect x="648" y="403" width="9" height="82" fill="#1f47a0" />
<rect x="658" y="426" width="10" height="59" fill="#1f47a0" />
<rect x="669" y="429" width="9" height="56" fill="#1f47a0" />
<rect x="679" y="426" width="9" height="59" fill="#1f47a0" />
<rect x="689" y="447" width="9" height="38" fill="#1f47a0" />
<rect x="699" y="434" width="9" height="51" fill="#1f47a0" />
<rect x="709" y="410" width="9" height="75" fill="#1f47a0" />
<rect x="719" y="431" width="9" height="54" fill="#1f47a0" />
<rect x="729" y="447" width="9" height="38" fill="#1f47a0" />
<rect x="739" y="419" width="9" height="66" fill="#1f47a0" />
<rect x="749" y="414" width="10" height="71" fill="#1f47a0" />
<rect x="760" y="421" width="8" height="64" fill="#1f47a0" />
<rect x="769" y="414" width="9" height="71" fill="#1f47a0" />
<rect x="779" y="419" width="9" height="66" fill="#1f47a0" />
<rect x="789" y="419" width="9" height="66" fill="#1f47a0" />
<rect x="799" y="456" width="10" height="29" fill="#1f47a0" />
<rect x="810" y="414" width="9" height="71" fill="#1f47a0" />
<rect x="820" y="447" width="8" height="38" fill="#1f47a0" />
<rect x="829" y="423" width="9" height="62" fill="#1f47a0" />
<rect x="839" y="414" width="9" height="71" fill="#1f47a0" />
<rect x="849" y="414" width="10" height="71" fill="#1f47a0" />
<rect x="860" y="429" width="9" height="56" fill="#1f47a0" />
<rect x="870" y="429" width="9" height="56" fill="#1f47a0" />
<rect x="880" y="421" width="8" height="64" fill="#1f47a0" />
<rect x="889" y="443" width="9" height="42" fill="#1f47a0" />
<rect x="899" y="423" width="10" height="62" fill="#1f47a0" />
<rect x="910" y="447" width="9" height="38" fill="#1f47a0" />
<rect x="920" y="431" width="9" height="54" fill="#1f47a0" />
<rect x="930" y="421" width="9" height="64" fill="#1f47a0" />
<rect x="940" y="462" width="8" height="23" fill="#1f47a0" />
<rect x="949" y="419" width="10" height="66" fill="#1f47a0" />
<rect x="960" y="443" width="9" height="42" fill="#1f47a0" />
<rect x="970" y="427" width="9" height="58" fill="#1f47a0" />
<rect x="980" y="447" width="9" height="38" fill="#1f47a0" />
<rect x="990" y="426" width="10" height="59" fill="#1f47a0" />
<rect x="1001" y="421" width="8" height="64" fill="#1f47a0" />
<rect x="1010" y="421" width="9" height="64" fill="#1f47a0" />
<rect x="1020" y="431" width="9" height="54" fill="#1f47a0" />
<rect x="1030" y="459" width="9" height="26" fill="#1f47a0" />
<rect x="1040" y="416" width="10" height="69" fill="#1f47a0" />
<rect x="1051" y="423" width="9" height="62" fill="#1f47a0" />
<rect x="1061" y="434" width="8" height="51" fill="#1f47a0" />
<rect x="1070" y="429" width="9" height="56" fill="#1f47a0" />
<rect x="1080" y="426" width="9" height="59" fill="#1f47a0" />
<rect x="1090" y="401" width="10" height="84" fill="#1f47a0" />
<rect x="1101" y="447" width="9" height="38" fill="#1f47a0" />
<rect x="1111" y="396" width="9" height="89" fill="#1f47a0" />
<rect x="1121" y="426" width="8" height="59" fill="#1f47a0" />
<rect x="1130" y="445" width="9" height="40" fill="#1f47a0" />
<rect x="1140" y="410" width="10" height="75" fill="#1f47a0" />
<rect x="1151" y="405" width="9" height="80" fill="#1f47a0" />
<rect x="1161" y="443" width="9" height="42" fill="#1f47a0" />
<rect x="1171" y="438" width="9" height="47" fill="#1f47a0" />
<rect x="1181" y="423" width="8" height="62" fill="#1f47a0" />
<rect x="1190" y="427" width="10" height="58" fill="#1f47a0" />
<rect x="1201" y="421" width="9" height="64" fill="#1f47a0" />
<rect x="1211" y="436" width="9" height="49" fill="#1f47a0" />
<rect x="1221" y="452" width="9" height="33" fill="#1f47a0" />
<rect x="1231" y="431" width="9" height="54" fill="#1f47a0" />
<rect x="1241" y="443" width="9" height="42" fill="#1f47a0" />
<rect x="1251" y="410" width="9" height="75" fill="#1f47a0" />
<rect x="1261" y="438" width="9" height="47" fill="#1f47a0" />
<rect x="1271" y="434" width="9" height="51" fill="#1f47a0" />
<rect x="1281" y="423" width="9" height="62" fill="#1f47a0" />
<rect x="1291" y="429" width="10" height="56" fill="#1f47a0" />
<rect x="1302" y="419" width="8" height="66" fill="#1f47a0" />
<rect x="1311" y="438" width="9" height="47" fill="#1f47a0" />
<rect x="1321" y="429" width="9" height="56" fill="#1f47a0" />
<rect x="1331" y="431" width="10" height="54" fill="#1f47a0" />
<rect x="1342" y="450" width="9" height="35" fill="#1f47a0" />
<rect x="1352" y="452" width="9" height="33" fill="#1f47a0" />
</g>
<g shape-rendering="crispEdges">
<rect x="569" y="652" width="9" height="46" fill="#1f47a0" />
<rect x="579" y="630" width="8" height="68" fill="#1f47a0" />
<rect x="588" y="658" width="9" height="40" fill="#1f47a0" />
<rect x="598" y="670" width="9" height="28" fill="#1f47a0" />
<rect x="608" y="686" width="10" height="12" fill="#1f47a0" />
<rect x="619" y="647" width="9" height="51" fill="#1f47a0" />
<rect x="629" y="658" width="9" height="40" fill="#1f47a0" />
<rect x="639" y="635" width="8" height="63" fill="#1f47a0" />
<rect x="648" y="601" width="9" height="97" fill="#1f47a0" />
<rect x="658" y="670" width="10" height="28" fill="#1f47a0" />
<rect x="669" y="681" width="9" height="17" fill="#1f47a0" />
<rect x="679" y="647" width="9" height="51" fill="#1f47a0" />
<rect x="689" y="681" width="9" height="17" fill="#1f47a0" />
<rect x="699" y="658" width="9" height="40" fill="#1f47a0" />
<rect x="709" y="664" width="9" height="34" fill="#1f47a0" />
<rect x="719" y="652" width="9" height="46" fill="#1f47a0" />
<rect x="729" y="686" width="9" height="12" fill="#1f47a0" />
<rect x="739" y="686" width="9" height="12" fill="#1f47a0" />
<rect x="749" y="681" width="10" height="17" fill="#1f47a0" />
<rect x="760" y="601" width="8" height="97" fill="#1f47a0" />
<rect x="769" y="624" width="9" height="74" fill="#1f47a0" />
<rect x="779" y="647" width="9" height="51" fill="#1f47a0" />
<rect x="789" y="676" width="9" height="22" fill="#1f47a0" />
<rect x="799" y="664" width="10" height="34" fill="#1f47a0" />
<rect x="810" y="641" width="9" height="57" fill="#1f47a0" />
<rect x="820" y="670" width="8" height="28" fill="#1f47a0" />
<rect x="829" y="652" width="9" height="46" fill="#1f47a0" />
<rect x="839" y="624" width="9" height="74" fill="#1f47a0" />
<rect x="849" y="652" width="10" height="46" fill="#1f47a0" />
<rect x="860" y="676" width="9" height="22" fill="#1f47a0" />
<rect x="870" y="647" width="9" height="51" fill="#1f47a0" />
<rect x="880" y="635" width="8" height="63" fill="#1f47a0" />
<rect x="889" y="664" width="9" height="34" fill="#1f47a0" />
<rect x="899" y="630" width="10" height="68" fill="#1f47a0" />
<rect x="910" y="676" width="9" height="22" fill="#1f47a0" />
<rect x="920" y="670" width="9" height="28" fill="#1f47a0" />
<rect x="930" y="658" width="9" height="40" fill="#1f47a0" />
<rect x="940" y="681" width="8" height="17" fill="#1f47a0" />
<rect x="949" y="635" width="10" height="63" fill="#1f47a0" />
<rect x="960" y="664" width="9" height="34" fill="#1f47a0" />
<rect x="970" y="652" width="9" height="46" fill="#1f47a0" />
<rect x="980" y="692" width="9" height="6" fill="#1f47a0" />
<rect x="990" y="670" width="10" height="28" fill="#1f47a0" />
<rect x="1001" y="647" width="8" height="51" fill="#1f47a0" />
<rect x="1010" y="652" width="9" height="46" fill="#1f47a0" />
<rect x="1020" y="624" width="9" height="74" fill="#1f47a0" />
<rect x="1030" y="686" width="9" height="12" fill="#1f47a0" />
<rect x="1040" y="670" width="10" height="28" fill="#1f47a0" />
<rect x="1051" y="664" width="9" height="34" fill="#1f47a0" />
<rect x="1061" y="670" width="8" height="28" fill="#1f47a0" />
<rect x="1070" y="635" width="9" height="63" fill="#1f47a0" />
<rect x="1080" y="681" width="9" height="17" fill="#1f47a0" />
<rect x="1090" y="618" width="10" height="80" fill="#1f47a0" />
<rect x="1101" y="670" width="9" height="28" fill="#1f47a0" />
<rect x="1111" y="630" width="9" height="68" fill="#1f47a0" />
<rect x="1121" y="670" width="8" height="28" fill="#1f47a0" />
<rect x="1130" y="681" width="9" height="17" fill="#1f47a0" />
<rect x="1140" y="670" width="10" height="28" fill="#1f47a0" />
<rect x="1151" y="641" width="9" height="57" fill="#1f47a0" />
<rect x="1161" y="686" width="9" height="12" fill="#1f47a0" />
<rect x="1171" y="641" width="9" height="57" fill="#1f47a0" />
<rect x="1181" y="676" width="8" height="22" fill="#1f47a0" />
<rect x="1190" y="664" width="10" height="34" fill="#1f47a0" />
<rect x="1201" y="692" width="9" height="6" fill="#1f47a0" />
<rect x="1211" y="676" width="9" height="22" fill="#1f47a0" />
<rect x="1221" y="658" width="9" height="40" fill="#1f47a0" />
<rect x="1231" y="676" width="9" height="22" fill="#1f47a0" />
<rect x="1241" y="664" width="9" height="34" fill="#1f47a0" />
<rect x="1251" y="635" width="9" height="63" fill="#1f47a0" />
<rect x="1261" y="647" width="9" height="51" fill="#1f47a0" />
<rect x="1271" y="658" width="9" height="40" fill="#1f47a0" />
<rect x="1281" y="670" width="9" height="28" fill="#1f47a0" />
<rect x="1291" y="658" width="10" height="40" fill="#1f47a0" />
<rect x="1302" y="652" width="8" height="46" fill="#1f47a0" />
<rect x="1311" y="647" width="9" height="51" fill="#1f47a0" />
<rect x="1321" y="652" width="9" height="46" fill="#1f47a0" />
<rect x="1331" y="670" width="10" height="28" fill="#1f47a0" />
<rect x="1342" y="658" width="9" height="40" fill="#1f47a0" />
<rect x="1352" y="647" width="9" height="51" fill="#1f47a0" />
</g>
<defs><linearGradient id="mg" x1="0" y1="0" x2="0" y2="1"><stop offset="0" stop-color="#aac2ec"/><stop offset="1" stop-color="#3a6cc8"/></linearGradient></defs>
<rect x="571.5" y="506.2" width="2" height="6.8" fill="url(#mg)" opacity="1"/>
<path d="M573.9 509.6 H579.3" stroke="#000" stroke-width="1.35" fill="none"/>
<path d="M582.6 509.6 L578 506.9 L579.1 509.6 L578 512.3 Z" fill="#000"/>
<rect x="620.5" y="506.2" width="2" height="6.8" fill="url(#mg)" opacity="1"/>
<path d="M622.9 509.6 H628.3" stroke="#000" stroke-width="1.35" fill="none"/>
<path d="M631.6 509.6 L627 506.9 L628.1 509.6 L627 512.3 Z" fill="#000"/>
<rect x="582" y="521.3" width="2" height="6.8" fill="url(#mg)" opacity="1"/>
<path d="M584.4 524.7 H589.8" stroke="#000" stroke-width="1.35" fill="none"/>
<path d="M593.1 524.7 L588.5 522 L589.6 524.7 L588.5 527.4 Z" fill="#000"/>
<rect x="634.5" y="521.3" width="2" height="6.8" fill="url(#mg)" opacity="1"/>
<path d="M636.9 524.7 H642.3" stroke="#000" stroke-width="1.35" fill="none"/>
<path d="M645.6 524.7 L641 522 L642.1 524.7 L641 527.4 Z" fill="#000"/>
<rect x="678" y="506.2" width="2" height="6.8" fill="url(#mg)" opacity="1"/>
<path d="M680.4 509.6 H685.8" stroke="#000" stroke-width="1.35" fill="none"/>
<path d="M689.1 509.6 L684.5 506.9 L685.6 509.6 L684.5 512.3 Z" fill="#000"/>
<rect x="764.1" y="506.2" width="2" height="6.8" fill="url(#mg)" opacity="1"/>
<path d="M766.5 509.6 H771.9" stroke="#000" stroke-width="1.35" fill="none"/>
<path d="M775.2 509.6 L770.6 506.9 L771.7 509.6 L770.6 512.3 Z" fill="#000"/>
<rect x="783.9" y="506.2" width="3" height="6.8" fill="url(#mg)" opacity="1"/>
<path d="M787.3 509.6 H792.7" stroke="#000" stroke-width="1.35" fill="none"/>
<path d="M796 509.6 L791.4 506.9 L792.5 509.6 L791.4 512.3 Z" fill="#000"/>
<rect x="803" y="506.2" width="3" height="6.8" fill="url(#mg)" opacity="1"/>
<path d="M806.4 509.6 H811.8" stroke="#000" stroke-width="1.35" fill="none"/>
<path d="M815.1 509.6 L810.5 506.9 L811.6 509.6 L810.5 512.3 Z" fill="#000"/>
<rect x="824" y="506.2" width="3" height="6.8" fill="url(#mg)" opacity="1"/>
<path d="M827.4 509.6 H832.8" stroke="#000" stroke-width="1.35" fill="none"/>
<path d="M836.1 509.6 L831.5 506.9 L832.6 509.6 L831.5 512.3 Z" fill="#000"/>
<rect x="861.1" y="506.2" width="2" height="6.8" fill="url(#mg)" opacity="1"/>
<path d="M863.5 509.6 H868.9" stroke="#000" stroke-width="1.35" fill="none"/>
<path d="M872.2 509.6 L867.6 506.9 L868.7 509.6 L867.6 512.3 Z" fill="#000"/>
<rect x="878" y="506.2" width="3" height="6.8" fill="url(#mg)" opacity="1"/>
<path d="M881.4 509.6 H886.8" stroke="#000" stroke-width="1.35" fill="none"/>
<path d="M890.1 509.6 L885.5 506.9 L886.6 509.6 L885.5 512.3 Z" fill="#000"/>
<rect x="907.3" y="506.2" width="2" height="6.8" fill="url(#mg)" opacity="1"/>
<path d="M909.7 509.6 H915.1" stroke="#000" stroke-width="1.35" fill="none"/>
<path d="M918.4 509.6 L913.8 506.9 L914.9 509.6 L913.8 512.3 Z" fill="#000"/>
<rect x="926" y="506.2" width="3" height="6.8" fill="url(#mg)" opacity="1"/>
<path d="M929.4 509.6 H934.8" stroke="#000" stroke-width="1.35" fill="none"/>
<path d="M938.1 509.6 L933.5 506.9 L934.6 509.6 L933.5 512.3 Z" fill="#000"/>
<rect x="951.1" y="506.2" width="3" height="6.8" fill="url(#mg)" opacity="1"/>
<path d="M954.5 509.6 H959.9" stroke="#000" stroke-width="1.35" fill="none"/>
<path d="M963.2 509.6 L958.6 506.9 L959.7 509.6 L958.6 512.3 Z" fill="#000"/>
<rect x="1036.2" y="506.2" width="3" height="6.8" fill="url(#mg)" opacity="1"/>
<path d="M1039.6 509.6 H1045" stroke="#000" stroke-width="1.35" fill="none"/>
<path d="M1048.3 509.6 L1043.7 506.9 L1044.8 509.6 L1043.7 512.3 Z" fill="#000"/>
<rect x="1077.1" y="506.2" width="3" height="6.8" fill="url(#mg)" opacity="1"/>
<path d="M1080.5 509.6 H1085.9" stroke="#000" stroke-width="1.35" fill="none"/>
<path d="M1089.2 509.6 L1084.6 506.9 L1085.7 509.6 L1084.6 512.3 Z" fill="#000"/>
<rect x="1100.9" y="506.2" width="2" height="6.8" fill="url(#mg)" opacity="1"/>
<path d="M1103.3 509.6 H1108.7" stroke="#000" stroke-width="1.35" fill="none"/>
<path d="M1112 509.6 L1107.4 506.9 L1108.5 509.6 L1107.4 512.3 Z" fill="#000"/>
<rect x="1128.1" y="506.2" width="2" height="6.8" fill="url(#mg)" opacity="1"/>
<path d="M1130.5 509.6 H1135.9" stroke="#000" stroke-width="1.35" fill="none"/>
<path d="M1139.2 509.6 L1134.6 506.9 L1135.7 509.6 L1134.6 512.3 Z" fill="#000"/>
<rect x="1198.1" y="506.2" width="3" height="6.8" fill="url(#mg)" opacity="1"/>
<path d="M1201.5 509.6 H1206.9" stroke="#000" stroke-width="1.35" fill="none"/>
<path d="M1210.2 509.6 L1205.6 506.9 L1206.7 509.6 L1205.6 512.3 Z" fill="#000"/>
<rect x="1255" y="506.2" width="2" height="6.8" fill="url(#mg)" opacity="1"/>
<path d="M1257.4 509.6 H1262.8" stroke="#000" stroke-width="1.35" fill="none"/>
<path d="M1266.1 509.6 L1261.5 506.9 L1262.6 509.6 L1261.5 512.3 Z" fill="#000"/>
<rect x="1276.1" y="506.2" width="2" height="6.8" fill="url(#mg)" opacity="1"/>
<path d="M1278.5 509.6 H1283.9" stroke="#000" stroke-width="1.35" fill="none"/>
<path d="M1287.2 509.6 L1282.6 506.9 L1283.7 509.6 L1282.6 512.3 Z" fill="#000"/>
<rect x="1299.1" y="506.2" width="3" height="6.8" fill="url(#mg)" opacity="1"/>
<path d="M1302.5 509.6 H1307.9" stroke="#000" stroke-width="1.35" fill="none"/>
<path d="M1311.2 509.6 L1306.6 506.9 L1307.7 509.6 L1306.6 512.3 Z" fill="#000"/>
<rect x="1314.1" y="506.2" width="3" height="6.8" fill="url(#mg)" opacity="1"/>
<path d="M1317.5 509.6 H1322.9" stroke="#000" stroke-width="1.35" fill="none"/>
<path d="M1326.2 509.6 L1321.6 506.9 L1322.7 509.6 L1321.6 512.3 Z" fill="#000"/>
<rect x="678" y="514.1" width="2" height="6.8" fill="url(#mg)" opacity="1"/>
<path d="M680.4 517.5 H685.8" stroke="#000" stroke-width="1.35" fill="none"/>
<path d="M689.1 517.5 L684.5 514.8 L685.6 517.5 L684.5 520.2 Z" fill="#000"/>
<rect x="764.9" y="514.1" width="2" height="6.8" fill="url(#mg)" opacity="1"/>
<path d="M767.3 517.5 H772.7" stroke="#000" stroke-width="1.35" fill="none"/>
<path d="M776 517.5 L771.4 514.8 L772.5 517.5 L771.4 520.2 Z" fill="#000"/>
<rect x="783.9" y="514.1" width="3" height="6.8" fill="url(#mg)" opacity="1"/>
<path d="M787.3 517.5 H792.7" stroke="#000" stroke-width="1.35" fill="none"/>
<path d="M796 517.5 L791.4 514.8 L792.5 517.5 L791.4 520.2 Z" fill="#000"/>
<rect x="804.9" y="514.1" width="3" height="6.8" fill="url(#mg)" opacity="1"/>
<path d="M808.3 517.5 H813.7" stroke="#000" stroke-width="1.35" fill="none"/>
<path d="M817 517.5 L812.4 514.8 L813.5 517.5 L812.4 520.2 Z" fill="#000"/>
<rect x="861.1" y="514.1" width="3" height="6.8" fill="url(#mg)" opacity="1"/>
<path d="M864.5 517.5 H869.9" stroke="#000" stroke-width="1.35" fill="none"/>
<path d="M873.2 517.5 L868.6 514.8 L869.7 517.5 L868.6 520.2 Z" fill="#000"/>
<rect x="907.3" y="514.1" width="2" height="6.8" fill="url(#mg)" opacity="1"/>
<path d="M909.7 517.5 H915.1" stroke="#000" stroke-width="1.35" fill="none"/>
<path d="M918.4 517.5 L913.8 514.8 L914.9 517.5 L913.8 520.2 Z" fill="#000"/>
<rect x="926" y="514.1" width="3" height="6.8" fill="url(#mg)" opacity="1"/>
<path d="M929.4 517.5 H934.8" stroke="#000" stroke-width="1.35" fill="none"/>
<path d="M938.1 517.5 L933.5 514.8 L934.6 517.5 L933.5 520.2 Z" fill="#000"/>
<rect x="951.1" y="514.1" width="3" height="6.8" fill="url(#mg)" opacity="1"/>
<path d="M954.5 517.5 H959.9" stroke="#000" stroke-width="1.35" fill="none"/>
<path d="M963.2 517.5 L958.6 514.8 L959.7 517.5 L958.6 520.2 Z" fill="#000"/>
<rect x="1045.1" y="514.1" width="2" height="6.8" fill="url(#mg)" opacity="1"/>
<path d="M1047.5 517.5 H1052.9" stroke="#000" stroke-width="1.35" fill="none"/>
<path d="M1056.2 517.5 L1051.6 514.8 L1052.7 517.5 L1051.6 520.2 Z" fill="#000"/>
<rect x="1090.2" y="514.1" width="3" height="6.8" fill="url(#mg)" opacity="1"/>
<path d="M1093.6 517.5 H1099" stroke="#000" stroke-width="1.35" fill="none"/>
<path d="M1102.3 517.5 L1097.7 514.8 L1098.8 517.5 L1097.7 520.2 Z" fill="#000"/>
<rect x="1136.2" y="514.1" width="3" height="6.8" fill="url(#mg)" opacity="1"/>
<path d="M1139.6 517.5 H1145" stroke="#000" stroke-width="1.35" fill="none"/>
<path d="M1148.3 517.5 L1143.7 514.8 L1144.8 517.5 L1143.7 520.2 Z" fill="#000"/>
<rect x="1207.1" y="514.1" width="2" height="6.8" fill="url(#mg)" opacity="1"/>
<path d="M1209.5 517.5 H1214.9" stroke="#000" stroke-width="1.35" fill="none"/>
<path d="M1218.2 517.5 L1213.6 514.8 L1214.7 517.5 L1213.6 520.2 Z" fill="#000"/>
<rect x="1255" y="514.1" width="3" height="6.8" fill="url(#mg)" opacity="1"/>
<path d="M1258.4 517.5 H1263.8" stroke="#000" stroke-width="1.35" fill="none"/>
<path d="M1267.1 517.5 L1262.5 514.8 L1263.6 517.5 L1262.5 520.2 Z" fill="#000"/>
<rect x="1279.1" y="514.1" width="3" height="6.8" fill="url(#mg)" opacity="1"/>
<path d="M1282.5 517.5 H1287.9" stroke="#000" stroke-width="1.35" fill="none"/>
<path d="M1291.2 517.5 L1286.6 514.8 L1287.7 517.5 L1286.6 520.2 Z" fill="#000"/>
<rect x="764.9" y="521.3" width="2" height="6.8" fill="url(#mg)" opacity="1"/>
<path d="M767.3 524.7 H772.7" stroke="#000" stroke-width="1.35" fill="none"/>
<path d="M776 524.7 L771.4 522 L772.5 524.7 L771.4 527.4 Z" fill="#000"/>
<rect x="793.1" y="521.3" width="3" height="6.8" fill="url(#mg)" opacity="1"/>
<path d="M796.5 524.7 H801.9" stroke="#000" stroke-width="1.35" fill="none"/>
<path d="M805.2 524.7 L800.6 522 L801.7 524.7 L800.6 527.4 Z" fill="#000"/>
<rect x="813.2" y="521.3" width="3" height="6.8" fill="url(#mg)" opacity="1"/>
<path d="M816.6 524.7 H822" stroke="#000" stroke-width="1.35" fill="none"/>
<path d="M825.3 524.7 L820.7 522 L821.8 524.7 L820.7 527.4 Z" fill="#000"/>
<rect x="861.1" y="521.3" width="3" height="6.8" fill="url(#mg)" opacity="1"/>
<path d="M864.5 524.7 H869.9" stroke="#000" stroke-width="1.35" fill="none"/>
<path d="M873.2 524.7 L868.6 522 L869.7 524.7 L868.6 527.4 Z" fill="#000"/>
<rect x="907.3" y="521.3" width="2" height="6.8" fill="url(#mg)" opacity="1"/>
<path d="M909.7 524.7 H915.1" stroke="#000" stroke-width="1.35" fill="none"/>
<path d="M918.4 524.7 L913.8 522 L914.9 524.7 L913.8 527.4 Z" fill="#000"/>
<rect x="938" y="521.3" width="3" height="6.8" fill="url(#mg)" opacity="1"/>
<path d="M941.4 524.7 H946.8" stroke="#000" stroke-width="1.35" fill="none"/>
<path d="M950.1 524.7 L945.5 522 L946.6 524.7 L945.5 527.4 Z" fill="#000"/>
<rect x="959.3" y="521.3" width="3" height="6.8" fill="url(#mg)" opacity="1"/>
<path d="M962.7 524.7 H968.1" stroke="#000" stroke-width="1.35" fill="none"/>
<path d="M971.4 524.7 L966.8 522 L967.9 524.7 L966.8 527.4 Z" fill="#000"/>
<rect x="1045.1" y="521.3" width="2" height="6.8" fill="url(#mg)" opacity="1"/>
<path d="M1047.5 524.7 H1052.9" stroke="#000" stroke-width="1.35" fill="none"/>
<path d="M1056.2 524.7 L1051.6 522 L1052.7 524.7 L1051.6 527.4 Z" fill="#000"/>
<rect x="1090.2" y="521.3" width="3" height="6.8" fill="url(#mg)" opacity="1"/>
<path d="M1093.6 524.7 H1099" stroke="#000" stroke-width="1.35" fill="none"/>
<path d="M1102.3 524.7 L1097.7 522 L1098.8 524.7 L1097.7 527.4 Z" fill="#000"/>
<rect x="1136.2" y="521.3" width="3" height="6.8" fill="url(#mg)" opacity="1"/>
<path d="M1139.6 524.7 H1145" stroke="#000" stroke-width="1.35" fill="none"/>
<path d="M1148.3 524.7 L1143.7 522 L1144.8 524.7 L1143.7 527.4 Z" fill="#000"/>
<rect x="1255" y="521.3" width="3" height="6.8" fill="url(#mg)" opacity="1"/>
<path d="M1258.4 524.7 H1263.8" stroke="#000" stroke-width="1.35" fill="none"/>
<path d="M1267.1 524.7 L1262.5 522 L1263.6 524.7 L1262.5 527.4 Z" fill="#000"/>
<rect x="800.1" y="529.1" width="3" height="6.8" fill="url(#mg)" opacity="1"/>
<path d="M803.5 532.5 H808.9" stroke="#000" stroke-width="1.35" fill="none"/>
<path d="M812.2 532.5 L807.6 529.8 L808.7 532.5 L807.6 535.2 Z" fill="#000"/>
<rect x="871.9" y="529.1" width="3" height="6.8" fill="url(#mg)" opacity="1"/>
<path d="M875.3 532.5 H880.7" stroke="#000" stroke-width="1.35" fill="none"/>
<path d="M884 532.5 L879.4 529.8 L880.5 532.5 L879.4 535.2 Z" fill="#000"/>
<rect x="919" y="529.1" width="2" height="6.8" fill="url(#mg)" opacity="1"/>
<path d="M921.4 532.5 H926.8" stroke="#000" stroke-width="1.35" fill="none"/>
<path d="M930.1 532.5 L925.5 529.8 L926.6 532.5 L925.5 535.2 Z" fill="#000"/>
<rect x="960" y="529.1" width="2" height="6.8" fill="url(#mg)" opacity="1"/>
<path d="M962.4 532.5 H967.8" stroke="#000" stroke-width="1.35" fill="none"/>
<path d="M971.1 532.5 L966.5 529.8 L967.6 532.5 L966.5 535.2 Z" fill="#000"/>
<rect x="1045.1" y="529.1" width="2" height="6.8" fill="url(#mg)" opacity="1"/>
<path d="M1047.5 532.5 H1052.9" stroke="#000" stroke-width="1.35" fill="none"/>
<path d="M1056.2 532.5 L1051.6 529.8 L1052.7 532.5 L1051.6 535.2 Z" fill="#000"/>
<rect x="1090.2" y="529.1" width="3" height="6.8" fill="url(#mg)" opacity="1"/>
<path d="M1093.6 532.5 H1099" stroke="#000" stroke-width="1.35" fill="none"/>
<path d="M1102.3 532.5 L1097.7 529.8 L1098.8 532.5 L1097.7 535.2 Z" fill="#000"/>
<rect x="1136.2" y="529.1" width="3" height="6.8" fill="url(#mg)" opacity="1"/>
<path d="M1139.6 532.5 H1145" stroke="#000" stroke-width="1.35" fill="none"/>
<path d="M1148.3 532.5 L1143.7 529.8 L1144.8 532.5 L1143.7 535.2 Z" fill="#000"/>
<rect x="1263.1" y="529.1" width="2" height="6.8" fill="url(#mg)" opacity="1"/>
<path d="M1265.5 532.5 H1270.9" stroke="#000" stroke-width="1.35" fill="none"/>
<path d="M1274.2 532.5 L1269.6 529.8 L1270.7 532.5 L1269.6 535.2 Z" fill="#000"/>
<rect x="876.1" y="537" width="2" height="6.8" fill="url(#mg)" opacity="1"/>
<path d="M878.5 540.4 H883.9" stroke="#000" stroke-width="1.35" fill="none"/>
<path d="M887.2 540.4 L882.6 537.7 L883.7 540.4 L882.6 543.1 Z" fill="#000"/>
<rect x="960" y="537" width="2" height="6.8" fill="url(#mg)" opacity="1"/>
<path d="M962.4 540.4 H967.8" stroke="#000" stroke-width="1.35" fill="none"/>
<path d="M971.1 540.4 L966.5 537.7 L967.6 540.4 L966.5 543.1 Z" fill="#000"/>
<rect x="1045.1" y="537" width="2" height="6.8" fill="url(#mg)" opacity="1"/>
<path d="M1047.5 540.4 H1052.9" stroke="#000" stroke-width="1.35" fill="none"/>
<path d="M1056.2 540.4 L1051.6 537.7 L1052.7 540.4 L1051.6 543.1 Z" fill="#000"/>
<rect x="1090.2" y="537" width="3" height="6.8" fill="url(#mg)" opacity="1"/>
<path d="M1093.6 540.4 H1099" stroke="#000" stroke-width="1.35" fill="none"/>
<path d="M1102.3 540.4 L1097.7 537.7 L1098.8 540.4 L1097.7 543.1 Z" fill="#000"/>
<rect x="1136.2" y="537" width="3" height="6.8" fill="url(#mg)" opacity="1"/>
<path d="M1139.6 540.4 H1145" stroke="#000" stroke-width="1.35" fill="none"/>
<path d="M1148.3 540.4 L1143.7 537.7 L1144.8 540.4 L1143.7 543.1 Z" fill="#000"/>
<rect x="1265.1" y="537" width="3" height="6.8" fill="url(#mg)" opacity="1"/>
<path d="M1268.5 540.4 H1273.9" stroke="#000" stroke-width="1.35" fill="none"/>
<path d="M1277.2 540.4 L1272.6 537.7 L1273.7 540.4 L1272.6 543.1 Z" fill="#000"/>
<rect x="961.1" y="545.2" width="3" height="6.8" fill="url(#mg)" opacity="1"/>
<path d="M964.5 548.6 H969.9" stroke="#000" stroke-width="1.35" fill="none"/>
<path d="M973.2 548.6 L968.6 545.9 L969.7 548.6 L968.6 551.3 Z" fill="#000"/>
<rect x="1045.1" y="545.2" width="2" height="6.8" fill="url(#mg)" opacity="1"/>
<path d="M1047.5 548.6 H1052.9" stroke="#000" stroke-width="1.35" fill="none"/>
<path d="M1056.2 548.6 L1051.6 545.9 L1052.7 548.6 L1051.6 551.3 Z" fill="#000"/>
<rect x="1090.2" y="545.2" width="3" height="6.8" fill="url(#mg)" opacity="1"/>
<path d="M1093.6 548.6 H1099" stroke="#000" stroke-width="1.35" fill="none"/>
<path d="M1102.3 548.6 L1097.7 545.9 L1098.8 548.6 L1097.7 551.3 Z" fill="#000"/>
<rect x="966" y="552.2" width="3" height="6.8" fill="url(#mg)" opacity="1"/>
<path d="M969.4 555.6 H974.8" stroke="#000" stroke-width="1.35" fill="none"/>
<path d="M978.1 555.6 L973.5 552.9 L974.6 555.6 L973.5 558.3 Z" fill="#000"/>
<rect x="1045.1" y="552.2" width="2" height="6.8" fill="url(#mg)" opacity="1"/>
<path d="M1047.5 555.6 H1052.9" stroke="#000" stroke-width="1.35" fill="none"/>
<path d="M1056.2 555.6 L1051.6 552.9 L1052.7 555.6 L1051.6 558.3 Z" fill="#000"/>
<rect x="1090.2" y="552.2" width="3" height="6.8" fill="url(#mg)" opacity="1"/>
<path d="M1093.6 555.6 H1099" stroke="#000" stroke-width="1.35" fill="none"/>
<path d="M1102.3 555.6 L1097.7 552.9 L1098.8 555.6 L1097.7 558.3 Z" fill="#000"/>
<rect x="1045.1" y="560.1" width="2" height="6.8" fill="url(#mg)" opacity="1"/>
<path d="M1047.5 563.5 H1052.9" stroke="#000" stroke-width="1.35" fill="none"/>
<path d="M1056.2 563.5 L1051.6 560.8 L1052.7 563.5 L1051.6 566.2 Z" fill="#000"/>
<rect x="1093.1" y="560.1" width="3" height="6.8" fill="url(#mg)" opacity="1"/>
<path d="M1096.5 563.5 H1101.9" stroke="#000" stroke-width="1.35" fill="none"/>
<path d="M1105.2 563.5 L1100.6 560.8 L1101.7 563.5 L1100.6 566.2 Z" fill="#000"/>
<rect x="1105" y="568" width="3" height="6.8" fill="url(#mg)" opacity="1"/>
<path d="M1108.4 571.4 H1113.8" stroke="#000" stroke-width="1.35" fill="none"/>
<path d="M1117.1 571.4 L1112.5 568.7 L1113.6 571.4 L1112.5 574.1 Z" fill="#000"/>
<rect x="1105" y="576.1" width="3" height="6.8" fill="url(#mg)" opacity="1"/>
<path d="M1108.4 579.5 H1113.8" stroke="#000" stroke-width="1.35" fill="none"/>
<path d="M1117.1 579.5 L1112.5 576.8 L1113.6 579.5 L1112.5 582.2 Z" fill="#000"/>
<rect x="634.5" y="717.2" width="2.7" height="6.8" fill="url(#mg)" opacity="1"/>
<path d="M634.1 720.6 H628.7" stroke="#000" stroke-width="1.35" fill="none"/>
<path d="M625.4 720.6 L630 717.9 L628.9 720.6 L630 723.3 Z" fill="#000"/>
<text x="625.5" y="733.8" font-size="12" fill="#222" textLength="43" lengthAdjust="spacingAndGlyphs" >peak_18</text>
<rect x="694.3" y="717.2" width="2.7" height="6.8" fill="url(#mg)" opacity="1"/>
<path d="M693.9 720.6 H688.5" stroke="#000" stroke-width="1.35" fill="none"/>
<path d="M685.2 720.6 L689.8 717.9 L688.7 720.6 L689.8 723.3 Z" fill="#000"/>
<text x="685.5" y="733.8" font-size="12" fill="#222" textLength="43" lengthAdjust="spacingAndGlyphs" >peak_19</text>
<rect x="648.1" y="740.1" width="2.7" height="6.8" fill="url(#mg)" opacity="1"/>
<path d="M651.2 743.5 H656.6" stroke="#000" stroke-width="1.35" fill="none"/>
<path d="M659.9 743.5 L655.3 740.8 L656.4 743.5 L655.3 746.2 Z" fill="#000"/>
<text x="648.7" y="756.7" font-size="12" fill="#222" textLength="36.5" lengthAdjust="spacingAndGlyphs" >peak_1</text>
<rect x="694.1" y="740.1" width="2.7" height="6.8" fill="url(#mg)" opacity="1"/>
<path d="M697.2 743.5 H702.6" stroke="#000" stroke-width="1.35" fill="none"/>
<path d="M705.9 743.5 L701.3 740.8 L702.4 743.5 L701.3 746.2 Z" fill="#000"/>
<text x="694.3" y="756.7" font-size="12" fill="#222" textLength="36.5" lengthAdjust="spacingAndGlyphs" >peak_2</text>
<rect x="764.1" y="717.2" width="2.7" height="6.8" fill="url(#mg)" opacity="1"/>
<path d="M767.2 720.6 H772.6" stroke="#000" stroke-width="1.35" fill="none"/>
<path d="M775.9 720.6 L771.3 717.9 L772.4 720.6 L771.3 723.3 Z" fill="#000"/>
<text x="764.9" y="733.8" font-size="12" fill="#222" textLength="36.3" lengthAdjust="spacingAndGlyphs" >peak_3</text>
<rect x="876.2" y="717.2" width="2.7" height="6.8" fill="url(#mg)" opacity="1"/>
<path d="M879.3 720.6 H884.7" stroke="#000" stroke-width="1.35" fill="none"/>
<path d="M888 720.6 L883.4 717.9 L884.5 720.6 L883.4 723.3 Z" fill="#000"/>
<text x="876.6" y="733.8" font-size="12" fill="#222" textLength="36.1" lengthAdjust="spacingAndGlyphs" >peak_4</text>
<rect x="876.2" y="740.1" width="2.7" height="6.8" fill="url(#mg)" opacity="1"/>
<path d="M879.3 743.5 H884.7" stroke="#000" stroke-width="1.35" fill="none"/>
<path d="M888 743.5 L883.4 740.8 L884.5 743.5 L883.4 746.2 Z" fill="#000"/>
<text x="876.6" y="756.7" font-size="12" fill="#222" textLength="36.1" lengthAdjust="spacingAndGlyphs" >peak_5</text>
<rect x="926" y="717.2" width="2.7" height="6.8" fill="url(#mg)" opacity="1"/>
<path d="M929.1 720.6 H934.5" stroke="#000" stroke-width="1.35" fill="none"/>
<path d="M937.8 720.6 L933.2 717.9 L934.3 720.6 L933.2 723.3 Z" fill="#000"/>
<text x="926.9" y="733.8" font-size="12" fill="#222" textLength="36.2" lengthAdjust="spacingAndGlyphs" >peak_6</text>
<rect x="1045.2" y="717.2" width="2.7" height="6.8" fill="url(#mg)" opacity="1"/>
<path d="M1048.3 720.6 H1053.7" stroke="#000" stroke-width="1.35" fill="none"/>
<path d="M1057 720.6 L1052.4 717.9 L1053.5 720.6 L1052.4 723.3 Z" fill="#000"/>
<text x="1045.6" y="733.8" font-size="12" fill="#222" textLength="36.1" lengthAdjust="spacingAndGlyphs" >peak_7</text>
<rect x="1050.2" y="740.1" width="2.7" height="6.8" fill="url(#mg)" opacity="1"/>
<path d="M1053.3 743.5 H1058.7" stroke="#000" stroke-width="1.35" fill="none"/>
<path d="M1062 743.5 L1057.4 740.8 L1058.5 743.5 L1057.4 746.2 Z" fill="#000"/>
<text x="1050.9" y="756.7" font-size="12" fill="#222" textLength="36.5" lengthAdjust="spacingAndGlyphs" >peak_8</text>
<rect x="1261.1" y="717.2" width="2.7" height="6.8" fill="url(#mg)" opacity="1"/>
<path d="M1260.7 720.6 H1255.3" stroke="#000" stroke-width="1.35" fill="none"/>
<path d="M1252 720.6 L1256.6 717.9 L1255.5 720.6 L1256.6 723.3 Z" fill="#000"/>
<text x="1253.2" y="733.8" font-size="12" fill="#222" textLength="43.4" lengthAdjust="spacingAndGlyphs" >peak_23</text>
<rect x="1265.2" y="740.1" width="2.7" height="6.8" fill="url(#mg)" opacity="1"/>
<path d="M1264.8 743.5 H1259.4" stroke="#000" stroke-width="1.35" fill="none"/>
<path d="M1256.1 743.5 L1260.7 740.8 L1259.6 743.5 L1260.7 746.2 Z" fill="#000"/>
<text x="1257" y="756.7" font-size="12" fill="#222" textLength="43.7" lengthAdjust="spacingAndGlyphs" >peak_24</text>
<rect x="1306.1" y="717.2" width="2.7" height="6.8" fill="url(#mg)" opacity="1"/>
<path d="M1309.2 720.6 H1314.6" stroke="#000" stroke-width="1.35" fill="none"/>
<path d="M1317.9 720.6 L1313.3 717.9 L1314.4 720.6 L1313.3 723.3 Z" fill="#000"/>
<text x="1307" y="733.8" font-size="12" fill="#222" textLength="42.4" lengthAdjust="spacingAndGlyphs" >peak_11</text>
<rect x="878.1" y="764.2" width="2.7" height="6.8" fill="url(#mg)" opacity="1"/>
<path d="M877.7 767.6 H872.3" stroke="#000" stroke-width="1.35" fill="none"/>
<path d="M869 767.6 L873.6 764.9 L872.5 767.6 L873.6 770.3 Z" fill="#000"/>
<rect x="1088" y="764.2" width="2.7" height="6.8" fill="url(#mg)" opacity="1"/>
<path d="M1087.6 767.6 H1082.2" stroke="#000" stroke-width="1.35" fill="none"/>
<path d="M1078.9 767.6 L1083.5 764.9 L1082.4 767.6 L1083.5 770.3 Z" fill="#000"/>
<rect x="1290.1" y="764.2" width="2.7" height="6.8" fill="url(#mg)" opacity="1"/>
<path d="M1293.2 767.6 H1298.6" stroke="#000" stroke-width="1.35" fill="none"/>
<path d="M1301.9 767.6 L1297.3 764.9 L1298.4 767.6 L1297.3 770.3 Z" fill="#000"/>
<rect x="558.4" y="116.4" width="163.1" height="23.7" fill="#fff" fill-opacity="0.68" stroke="#e6e6e6" stroke-opacity="0.8" stroke-width="1"/>
<circle cx="568" cy="128.85" r="6" fill="#b6b6b6"/>
<path d="M565.3 126.15 L570.7 131.55 M570.7 126.15 L565.3 131.55" stroke="#fff" stroke-width="1.6" fill="none"/>
<text x="579.4" y="131.8" font-size="12.4" fill="#464646" textLength="111.5" lengthAdjust="spacingAndGlyphs" >Reference sequence</text>
<rect x="558.4" y="165.4" width="198.4" height="23.1" fill="#fff" fill-opacity="0.68" stroke="#e6e6e6" stroke-opacity="0.8" stroke-width="1"/>
<g shape-rendering="crispEdges">
<rect x="568" y="183" width="11" height="5" fill="#f0e0b8" />
<rect x="588" y="187" width="11" height="1" fill="#f0e0b8" />
<rect x="628" y="185" width="11" height="3" fill="#f0e0b8" />
<rect x="658" y="187" width="11" height="1" fill="#f0e0b8" />
<rect x="718" y="182" width="11" height="6" fill="#f0e0b8" />
<rect x="739" y="167" width="11" height="21" fill="#f0e0b8" />
</g>
<circle cx="568" cy="177.55" r="6" fill="#b6b6b6"/>
<path d="M565.3 174.85 L570.7 180.25 M570.7 174.85 L565.3 180.25" stroke="#fff" stroke-width="1.6" fill="none"/>
<g transform="translate(0,180.1) scale(1,0.87) translate(0,-180.1)">
<text x="579.4" y="179.8" font-size="12.4" fill="#464646" textLength="53.7" lengthAdjust="spacingAndGlyphs" >genetrack</text>
<text x="638.4" y="179.8" font-size="12.4" fill="#606060" textLength="87.1" lengthAdjust="spacingAndGlyphs" >(feature density)</text>
</g>
<rect x="558.4" y="280.4" width="264.4" height="23.1" fill="#fff" fill-opacity="0.68" stroke="#e6e6e6" stroke-opacity="0.8" stroke-width="1"/>
<g shape-rendering="crispEdges">
<rect x="769" y="295" width="9" height="9" fill="#aeadd8" />
</g>
<circle cx="568" cy="292.55" r="6" fill="#b6b6b6"/>
<path d="M565.3 289.85 L570.7 295.25 M570.7 289.85 L565.3 295.25" stroke="#fff" stroke-width="1.6" fill="none"/>
<text x="579.4" y="295.9" font-size="12.4" fill="#464646" textLength="128.3" lengthAdjust="spacingAndGlyphs" >CRX121097-CRX121096</text>
<text x="712.6" y="295.9" font-size="12.4" fill="#606060" textLength="79.3" lengthAdjust="spacingAndGlyphs" >per 100,000 bp</text>
<rect x="558.4" y="396.4" width="264.4" height="24.4" fill="#fff" fill-opacity="0.68" stroke="#e6e6e6" stroke-opacity="0.8" stroke-width="1"/>
<g shape-rendering="crispEdges">
<rect x="579" y="412" width="8" height="9" fill="#aeadd8" />
<rect x="598" y="405" width="9" height="16" fill="#aeadd8" />
<rect x="608" y="407" width="10" height="14" fill="#aeadd8" />
<rect x="639" y="401" width="8" height="20" fill="#aeadd8" />
<rect x="648" y="403" width="9" height="18" fill="#aeadd8" />
<rect x="709" y="410" width="9" height="11" fill="#aeadd8" />
<rect x="739" y="419" width="9" height="2" fill="#aeadd8" />
<rect x="749" y="414" width="10" height="7" fill="#aeadd8" />
<rect x="769" y="414" width="9" height="7" fill="#aeadd8" />
<rect x="779" y="419" width="9" height="2" fill="#aeadd8" />
<rect x="789" y="419" width="9" height="2" fill="#aeadd8" />
<rect x="810" y="414" width="9" height="7" fill="#aeadd8" />
</g>
<circle cx="568" cy="409.2" r="6" fill="#b6b6b6"/>
<path d="M565.3 406.5 L570.7 411.9 M570.7 406.5 L565.3 411.9" stroke="#fff" stroke-width="1.6" fill="none"/>
<text x="579.4" y="411.6" font-size="12.4" fill="#464646" textLength="128.3" lengthAdjust="spacingAndGlyphs" >CRX121099-CRX121098</text>
<text x="712.6" y="411.6" font-size="12.4" fill="#606060" textLength="79.3" lengthAdjust="spacingAndGlyphs" >per 100,000 bp</text>
<rect x="558.4" y="505.4" width="106.2" height="22.8" fill="#fff" fill-opacity="0.68" stroke="#e6e6e6" stroke-opacity="0.8" stroke-width="1"/>
<circle cx="568" cy="517.4" r="6" fill="#b6b6b6"/>
<path d="M565.3 514.7 L570.7 520.1 M570.7 514.7 L565.3 520.1" stroke="#fff" stroke-width="1.6" fill="none"/>
<text x="579.4" y="521.2" font-size="12.4" fill="#464646" textLength="55.2" lengthAdjust="spacingAndGlyphs" >ath_Shoot</text>
<rect x="558.4" y="601.3" width="215.2" height="23.4" fill="#fff" fill-opacity="0.68" stroke="#e6e6e6" stroke-opacity="0.8" stroke-width="1"/>
<g shape-rendering="crispEdges">
<rect x="648" y="601" width="9" height="24" fill="#aeadd8" />
<rect x="760" y="601" width="8" height="24" fill="#aeadd8" />
<rect x="769" y="624" width="4.6" height="1" fill="#aeadd8" />
</g>
<circle cx="568" cy="613.6" r="6" fill="#b6b6b6"/>
<path d="M565.3 610.9 L570.7 616.3 M570.7 610.9 L565.3 616.3" stroke="#fff" stroke-width="1.6" fill="none"/>
<text x="579.4" y="616.8" font-size="12.4" fill="#464646" textLength="80.6" lengthAdjust="spacingAndGlyphs" >ath_Wild_Type</text>
<text x="665" y="616.8" font-size="12.4" fill="#606060" textLength="78.8" lengthAdjust="spacingAndGlyphs" >per 100,000 bp</text>
<rect x="558.4" y="716.5" width="192.3" height="23.8" fill="#fff" fill-opacity="0.68" stroke="#e6e6e6" stroke-opacity="0.8" stroke-width="1"/>
<circle cx="568" cy="729" r="6" fill="#b6b6b6"/>
<path d="M565.3 726.3 L570.7 731.7 M570.7 726.3 L565.3 731.7" stroke="#fff" stroke-width="1.6" fill="none"/>
<text x="579.1" y="732" font-size="12.4" fill="#464646" textLength="141.2" lengthAdjust="spacingAndGlyphs" >SRX1456211-SRX1456210</text>
<line x1="961.5" y1="166" x2="961.5" y2="262.8" stroke="#8a8a8a" stroke-width="0.9" opacity="0.8"/>
<line x1="956.3" y1="262.8" x2="961.5" y2="262.8" stroke="#777" stroke-width="1" />
<text x="950.3" y="267.8" font-size="12" fill="#333" textLength="5.72" lengthAdjust="spacingAndGlyphs" text-anchor="end" >0</text>
<line x1="956.3" y1="252.57" x2="961.5" y2="252.57" stroke="#777" stroke-width="1" />
<text x="950.3" y="257.57" font-size="12" fill="#333" textLength="11.43" lengthAdjust="spacingAndGlyphs" text-anchor="end" >10</text>
<line x1="956.3" y1="242.34" x2="961.5" y2="242.34" stroke="#777" stroke-width="1" />
<text x="950.3" y="247.34" font-size="12" fill="#333" textLength="11.43" lengthAdjust="spacingAndGlyphs" text-anchor="end" >20</text>
<line x1="956.3" y1="232.11" x2="961.5" y2="232.11" stroke="#777" stroke-width="1" />
<text x="950.3" y="237.11" font-size="12" fill="#333" textLength="11.43" lengthAdjust="spacingAndGlyphs" text-anchor="end" >30</text>
<line x1="956.3" y1="221.88" x2="961.5" y2="221.88" stroke="#777" stroke-width="1" />
<text x="950.3" y="226.88" font-size="12" fill="#333" textLength="11.43" lengthAdjust="spacingAndGlyphs" text-anchor="end" >40</text>
<line x1="956.3" y1="211.65" x2="961.5" y2="211.65" stroke="#777" stroke-width="1" />
<text x="950.3" y="216.65" font-size="12" fill="#333" textLength="11.43" lengthAdjust="spacingAndGlyphs" text-anchor="end" >50</text>
<line x1="956.3" y1="201.42" x2="961.5" y2="201.42" stroke="#777" stroke-width="1" />
<text x="950.3" y="206.42" font-size="12" fill="#333" textLength="11.43" lengthAdjust="spacingAndGlyphs" text-anchor="end" >60</text>
<line x1="956.3" y1="191.19" x2="961.5" y2="191.19" stroke="#777" stroke-width="1" />
<text x="950.3" y="196.19" font-size="12" fill="#333" textLength="11.43" lengthAdjust="spacingAndGlyphs" text-anchor="end" >70</text>
<line x1="956.3" y1="180.96" x2="961.5" y2="180.96" stroke="#777" stroke-width="1" />
<text x="950.3" y="185.96" font-size="12" fill="#333" textLength="11.43" lengthAdjust="spacingAndGlyphs" text-anchor="end" >80</text>
<line x1="956.3" y1="170.73" x2="961.5" y2="170.73" stroke="#777" stroke-width="1" />
<text x="950.3" y="177.13" font-size="12" fill="#333" textLength="11.43" lengthAdjust="spacingAndGlyphs" text-anchor="end" >90</text>
<line x1="959.2" y1="262.8" x2="961.5" y2="262.8" stroke="#8a8a8a" stroke-width="0.8" opacity="0.7"/>
<line x1="959.2" y1="257.69" x2="961.5" y2="257.69" stroke="#8a8a8a" stroke-width="0.8" opacity="0.7"/>
<line x1="959.2" y1="252.57" x2="961.5" y2="252.57" stroke="#8a8a8a" stroke-width="0.8" opacity="0.7"/>
<line x1="959.2" y1="247.45" x2="961.5" y2="247.45" stroke="#8a8a8a" stroke-width="0.8" opacity="0.7"/>
<line x1="959.2" y1="242.34" x2="961.5" y2="242.34" stroke="#8a8a8a" stroke-width="0.8" opacity="0.7"/>
<line x1="959.2" y1="237.22" x2="961.5" y2="237.22" stroke="#8a8a8a" stroke-width="0.8" opacity="0.7"/>
<line x1="959.2" y1="232.11" x2="961.5" y2="232.11" stroke="#8a8a8a" stroke-width="0.8" opacity="0.7"/>
<line x1="959.2" y1="226.99" x2="961.5" y2="226.99" stroke="#8a8a8a" stroke-width="0.8" opacity="0.7"/>
<line x1="959.2" y1="221.88" x2="961.5" y2="221.88" stroke="#8a8a8a" stroke-width="0.8" opacity="0.7"/>
<line x1="959.2" y1="216.76" x2="961.5" y2="216.76" stroke="#8a8a8a" stroke-width="0.8" opacity="0.7"/>
<line x1="959.2" y1="211.65" x2="961.5" y2="211.65" stroke="#8a8a8a" stroke-width="0.8" opacity="0.7"/>
<line x1="959.2" y1="206.53" x2="961.5" y2="206.53" stroke="#8a8a8a" stroke-width="0.8" opacity="0.7"/>
<line x1="959.2" y1="201.42" x2="961.5" y2="201.42" stroke="#8a8a8a" stroke-width="0.8" opacity="0.7"/>
<line x1="959.2" y1="196.3" x2="961.5" y2="196.3" stroke="#8a8a8a" stroke-width="0.8" opacity="0.7"/>
<line x1="959.2" y1="191.19" x2="961.5" y2="191.19" stroke="#8a8a8a" stroke-width="0.8" opacity="0.7"/>
<line x1="959.2" y1="186.07" x2="961.5" y2="186.07" stroke="#8a8a8a" stroke-width="0.8" opacity="0.7"/>
<line x1="959.2" y1="180.96" x2="961.5" y2="180.96" stroke="#8a8a8a" stroke-width="0.8" opacity="0.7"/>
<line x1="959.2" y1="175.84" x2="961.5" y2="175.84" stroke="#8a8a8a" stroke-width="0.8" opacity="0.7"/>
<line x1="959.2" y1="170.73" x2="961.5" y2="170.73" stroke="#8a8a8a" stroke-width="0.8" opacity="0.7"/>
<line x1="961.5" y1="281" x2="961.5" y2="377.1" stroke="#8a8a8a" stroke-width="0.9" opacity="0.8"/>
<line x1="956.3" y1="377.1" x2="961.5" y2="377.1" stroke="#777" stroke-width="1" />
<text x="950.3" y="383.1" font-size="12" fill="#333" textLength="5.72" lengthAdjust="spacingAndGlyphs" text-anchor="end" >0</text>
<line x1="956.3" y1="357.3" x2="961.5" y2="357.3" stroke="#777" stroke-width="1" />
<text x="950.3" y="363.3" font-size="12" fill="#333" textLength="11.43" lengthAdjust="spacingAndGlyphs" text-anchor="end" >10</text>
<line x1="956.3" y1="337.2" x2="961.5" y2="337.2" stroke="#777" stroke-width="1" />
<text x="950.3" y="343.2" font-size="12" fill="#333" textLength="11.43" lengthAdjust="spacingAndGlyphs" text-anchor="end" >20</text>
<line x1="956.3" y1="317.4" x2="961.5" y2="317.4" stroke="#777" stroke-width="1" />
<text x="950.3" y="323.4" font-size="12" fill="#333" textLength="11.43" lengthAdjust="spacingAndGlyphs" text-anchor="end" >30</text>
<line x1="956.3" y1="298.3" x2="961.5" y2="298.3" stroke="#777" stroke-width="1" />
<text x="950.3" y="303.3" font-size="12" fill="#333" textLength="11.43" lengthAdjust="spacingAndGlyphs" text-anchor="end" >40</text>
<line x1="959.2" y1="377.1" x2="961.5" y2="377.1" stroke="#8a8a8a" stroke-width="0.8" opacity="0.7"/>
<line x1="959.2" y1="373.16" x2="961.5" y2="373.16" stroke="#8a8a8a" stroke-width="0.8" opacity="0.7"/>
<line x1="959.2" y1="369.22" x2="961.5" y2="369.22" stroke="#8a8a8a" stroke-width="0.8" opacity="0.7"/>
<line x1="959.2" y1="365.28" x2="961.5" y2="365.28" stroke="#8a8a8a" stroke-width="0.8" opacity="0.7"/>
<line x1="959.2" y1="361.34" x2="961.5" y2="361.34" stroke="#8a8a8a" stroke-width="0.8" opacity="0.7"/>
<line x1="959.2" y1="357.4" x2="961.5" y2="357.4" stroke="#8a8a8a" stroke-width="0.8" opacity="0.7"/>
<line x1="959.2" y1="353.46" x2="961.5" y2="353.46" stroke="#8a8a8a" stroke-width="0.8" opacity="0.7"/>
<line x1="959.2" y1="349.52" x2="961.5" y2="349.52" stroke="#8a8a8a" stroke-width="0.8" opacity="0.7"/>
<line x1="959.2" y1="345.58" x2="961.5" y2="345.58" stroke="#8a8a8a" stroke-width="0.8" opacity="0.7"/>
<line x1="959.2" y1="341.64" x2="961.5" y2="341.64" stroke="#8a8a8a" stroke-width="0.8" opacity="0.7"/>
<line x1="959.2" y1="337.7" x2="961.5" y2="337.7" stroke="#8a8a8a" stroke-width="0.8" opacity="0.7"/>
<line x1="959.2" y1="333.76" x2="961.5" y2="333.76" stroke="#8a8a8a" stroke-width="0.8" opacity="0.7"/>
<line x1="959.2" y1="329.82" x2="961.5" y2="329.82" stroke="#8a8a8a" stroke-width="0.8" opacity="0.7"/>
<line x1="959.2" y1="325.88" x2="961.5" y2="325.88" stroke="#8a8a8a" stroke-width="0.8" opacity="0.7"/>
<line x1="959.2" y1="321.94" x2="961.5" y2="321.94" stroke="#8a8a8a" stroke-width="0.8" opacity="0.7"/>
<line x1="959.2" y1="318" x2="961.5" y2="318" stroke="#8a8a8a" stroke-width="0.8" opacity="0.7"/>
<line x1="959.2" y1="314.06" x2="961.5" y2="314.06" stroke="#8a8a8a" stroke-width="0.8" opacity="0.7"/>
<line x1="959.2" y1="310.12" x2="961.5" y2="310.12" stroke="#8a8a8a" stroke-width="0.8" opacity="0.7"/>
<line x1="959.2" y1="306.18" x2="961.5" y2="306.18" stroke="#8a8a8a" stroke-width="0.8" opacity="0.7"/>
<line x1="959.2" y1="302.24" x2="961.5" y2="302.24" stroke="#8a8a8a" stroke-width="0.8" opacity="0.7"/>
<line x1="959.2" y1="298.3" x2="961.5" y2="298.3" stroke="#8a8a8a" stroke-width="0.8" opacity="0.7"/>
<line x1="959.2" y1="294.36" x2="961.5" y2="294.36" stroke="#8a8a8a" stroke-width="0.8" opacity="0.7"/>
<line x1="959.2" y1="290.42" x2="961.5" y2="290.42" stroke="#8a8a8a" stroke-width="0.8" opacity="0.7"/>
<line x1="959.2" y1="286.48" x2="961.5" y2="286.48" stroke="#8a8a8a" stroke-width="0.8" opacity="0.7"/>
<line x1="959.2" y1="282.54" x2="961.5" y2="282.54" stroke="#8a8a8a" stroke-width="0.8" opacity="0.7"/>
<line x1="961.5" y1="397" x2="961.5" y2="485" stroke="#8a8a8a" stroke-width="0.9" opacity="0.8"/>
<line x1="956.3" y1="485" x2="961.5" y2="485" stroke="#777" stroke-width="1" />
<text x="950.3" y="491" font-size="12" fill="#333" textLength="5.72" lengthAdjust="spacingAndGlyphs" text-anchor="end" >0</text>
<line x1="956.3" y1="464.2" x2="961.5" y2="464.2" stroke="#777" stroke-width="1" />
<text x="950.3" y="470.2" font-size="12" fill="#333" textLength="11.43" lengthAdjust="spacingAndGlyphs" text-anchor="end" >10</text>
<line x1="956.3" y1="443.3" x2="961.5" y2="443.3" stroke="#777" stroke-width="1" />
<text x="950.3" y="449.3" font-size="12" fill="#333" textLength="11.43" lengthAdjust="spacingAndGlyphs" text-anchor="end" >20</text>
<line x1="956.3" y1="422" x2="961.5" y2="422" stroke="#777" stroke-width="1" />
<text x="950.3" y="428" font-size="12" fill="#333" textLength="11.43" lengthAdjust="spacingAndGlyphs" text-anchor="end" >30</text>
<line x1="956.3" y1="400.2" x2="961.5" y2="400.2" stroke="#777" stroke-width="1" />
<text x="950.3" y="405.2" font-size="12" fill="#333" textLength="11.43" lengthAdjust="spacingAndGlyphs" text-anchor="end" >40</text>
<line x1="959.2" y1="485" x2="961.5" y2="485" stroke="#8a8a8a" stroke-width="0.8" opacity="0.7"/>
<line x1="959.2" y1="480.76" x2="961.5" y2="480.76" stroke="#8a8a8a" stroke-width="0.8" opacity="0.7"/>
<line x1="959.2" y1="476.52" x2="961.5" y2="476.52" stroke="#8a8a8a" stroke-width="0.8" opacity="0.7"/>
<line x1="959.2" y1="472.28" x2="961.5" y2="472.28" stroke="#8a8a8a" stroke-width="0.8" opacity="0.7"/>
<line x1="959.2" y1="468.04" x2="961.5" y2="468.04" stroke="#8a8a8a" stroke-width="0.8" opacity="0.7"/>
<line x1="959.2" y1="463.8" x2="961.5" y2="463.8" stroke="#8a8a8a" stroke-width="0.8" opacity="0.7"/>
<line x1="959.2" y1="459.56" x2="961.5" y2="459.56" stroke="#8a8a8a" stroke-width="0.8" opacity="0.7"/>
<line x1="959.2" y1="455.32" x2="961.5" y2="455.32" stroke="#8a8a8a" stroke-width="0.8" opacity="0.7"/>
<line x1="959.2" y1="451.08" x2="961.5" y2="451.08" stroke="#8a8a8a" stroke-width="0.8" opacity="0.7"/>
<line x1="959.2" y1="446.84" x2="961.5" y2="446.84" stroke="#8a8a8a" stroke-width="0.8" opacity="0.7"/>
<line x1="959.2" y1="442.6" x2="961.5" y2="442.6" stroke="#8a8a8a" stroke-width="0.8" opacity="0.7"/>
<line x1="959.2" y1="438.36" x2="961.5" y2="438.36" stroke="#8a8a8a" stroke-width="0.8" opacity="0.7"/>
<line x1="959.2" y1="434.12" x2="961.5" y2="434.12" stroke="#8a8a8a" stroke-width="0.8" opacity="0.7"/>
<line x1="959.2" y1="429.88" x2="961.5" y2="429.88" stroke="#8a8a8a" stroke-width="0.8" opacity="0.7"/>
<line x1="959.2" y1="425.64" x2="961.5" y2="425.64" stroke="#8a8a8a" stroke-width="0.8" opacity="0.7"/>
<line x1="959.2" y1="421.4" x2="961.5" y2="421.4" stroke="#8a8a8a" stroke-width="0.8" opacity="0.7"/>
<line x1="959.2" y1="417.16" x2="961.5" y2="417.16" stroke="#8a8a8a" stroke-width="0.8" opacity="0.7"/>
<line x1="959.2" y1="412.92" x2="961.5" y2="412.92" stroke="#8a8a8a" stroke-width="0.8" opacity="0.7"/>
<line x1="959.2" y1="408.68" x2="961.5" y2="408.68" stroke="#8a8a8a" stroke-width="0.8" opacity="0.7"/>
<line x1="959.2" y1="404.44" x2="961.5" y2="404.44" stroke="#8a8a8a" stroke-width="0.8" opacity="0.7"/>
<line x1="959.2" y1="400.2" x2="961.5" y2="400.2" stroke="#8a8a8a" stroke-width="0.8" opacity="0.7"/>
<line x1="961.5" y1="601.9" x2="961.5" y2="698.1" stroke="#8a8a8a" stroke-width="0.9" opacity="0.8"/>
<line x1="956.3" y1="698.1" x2="961.5" y2="698.1" stroke="#777" stroke-width="1" />
<text x="950.3" y="704.1" font-size="12" fill="#333" textLength="5.72" lengthAdjust="spacingAndGlyphs" text-anchor="end" >0</text>
<line x1="956.3" y1="642.5" x2="961.5" y2="642.5" stroke="#777" stroke-width="1" />
<text x="950.3" y="647.5" font-size="12" fill="#333" textLength="11.43" lengthAdjust="spacingAndGlyphs" text-anchor="end" >10</text>
<line x1="959.2" y1="698.1" x2="961.5" y2="698.1" stroke="#8a8a8a" stroke-width="0.8" opacity="0.7"/>
<line x1="959.2" y1="692.54" x2="961.5" y2="692.54" stroke="#8a8a8a" stroke-width="0.8" opacity="0.7"/>
<line x1="959.2" y1="686.98" x2="961.5" y2="686.98" stroke="#8a8a8a" stroke-width="0.8" opacity="0.7"/>
<line x1="959.2" y1="681.42" x2="961.5" y2="681.42" stroke="#8a8a8a" stroke-width="0.8" opacity="0.7"/>
<line x1="959.2" y1="675.86" x2="961.5" y2="675.86" stroke="#8a8a8a" stroke-width="0.8" opacity="0.7"/>
<line x1="959.2" y1="670.3" x2="961.5" y2="670.3" stroke="#8a8a8a" stroke-width="0.8" opacity="0.7"/>
<line x1="959.2" y1="664.74" x2="961.5" y2="664.74" stroke="#8a8a8a" stroke-width="0.8" opacity="0.7"/>
<line x1="959.2" y1="659.18" x2="961.5" y2="659.18" stroke="#8a8a8a" stroke-width="0.8" opacity="0.7"/>
<line x1="959.2" y1="653.62" x2="961.5" y2="653.62" stroke="#8a8a8a" stroke-width="0.8" opacity="0.7"/>
<line x1="959.2" y1="648.06" x2="961.5" y2="648.06" stroke="#8a8a8a" stroke-width="0.8" opacity="0.7"/>
<line x1="959.2" y1="642.5" x2="961.5" y2="642.5" stroke="#8a8a8a" stroke-width="0.8" opacity="0.7"/>
<line x1="959.2" y1="636.94" x2="961.5" y2="636.94" stroke="#8a8a8a" stroke-width="0.8" opacity="0.7"/>
<line x1="959.2" y1="631.38" x2="961.5" y2="631.38" stroke="#8a8a8a" stroke-width="0.8" opacity="0.7"/>
<line x1="959.2" y1="625.82" x2="961.5" y2="625.82" stroke="#8a8a8a" stroke-width="0.8" opacity="0.7"/>
<line x1="959.2" y1="620.26" x2="961.5" y2="620.26" stroke="#8a8a8a" stroke-width="0.8" opacity="0.7"/>
<line x1="959.2" y1="614.7" x2="961.5" y2="614.7" stroke="#8a8a8a" stroke-width="0.8" opacity="0.7"/>
<line x1="959.2" y1="609.14" x2="961.5" y2="609.14" stroke="#8a8a8a" stroke-width="0.8" opacity="0.7"/>
<line x1="959.2" y1="603.58" x2="961.5" y2="603.58" stroke="#8a8a8a" stroke-width="0.8" opacity="0.7"/>
<rect x="557.2" y="24.5" width="805" height="25.2" fill="#355e8e" />
<text x="567.7" y="41.3" font-size="14" fill="#fff" textLength="52.3" lengthAdjust="spacingAndGlyphs" font-weight="bold" >Genome</text>
<text x="644.1" y="41.3" font-size="14" fill="#fff" textLength="33.8" lengthAdjust="spacingAndGlyphs" font-weight="bold" >Track</text>
<text x="702" y="41.3" font-size="14" fill="#fff" textLength="30.2" lengthAdjust="spacingAndGlyphs" font-weight="bold" >View</text>
<text x="756.8" y="41.3" font-size="14" fill="#fff" textLength="28.4" lengthAdjust="spacingAndGlyphs" font-weight="bold" >Help</text>
<rect x="1280.6" y="26.3" width="80.4" height="19.8" fill="#365f90" stroke="#2d527f" stroke-width="1"/>
<g fill="none" stroke="#fff" stroke-width="2.1"><rect x="1295.9" y="34.7" width="7.3" height="5.3" rx="2.6"/><rect x="1303.6" y="34.7" width="7.3" height="5.3" rx="2.6"/></g>
<path d="M1299.4 37.4 H1307.6" stroke="#fff" stroke-width="1.5"/>
<text x="1317.9" y="39.9" font-size="12" fill="#fff" textLength="29.6" lengthAdjust="spacingAndGlyphs" font-weight="bold" >Share</text>
<defs><linearGradient id="og" x1="0" y1="0" x2="0" y2="1"><stop offset="0" stop-color="#fdfdfd"/><stop offset="1" stop-color="#e6e6e6"/></linearGradient>
<linearGradient id="ob" x1="0" y1="0" x2="0" y2="1"><stop offset="0" stop-color="#e4edf8"/><stop offset="1" stop-color="#c6d3e4"/></linearGradient>
<linearGradient id="sg" x1="0" y1="0" x2="0" y2="1"><stop offset="0" stop-color="#ffffff"/><stop offset="1" stop-color="#ececec"/></linearGradient>
<linearGradient id="bg" x1="0" y1="0" x2="0" y2="1"><stop offset="0" stop-color="#ffffff"/><stop offset="1" stop-color="#e2e2e2"/></linearGradient></defs>
<rect x="557.6" y="49.6" width="804.6" height="16.8" fill="url(#og)" />
<line x1="557.6" y1="49.6" x2="1362.2" y2="49.6" stroke="#3b3b3b" stroke-width="0.8" />
<rect x="557.6" y="66.9" width="804.6" height="32.2" fill="#fff" />
<line x1="557.6" y1="66.4" x2="1362.2" y2="66.4" stroke="#444" stroke-width="1" />
<polygon points="557.6,67.9 771.9,67.9 1362.2,99 557.6,99" fill="#a4c0e6"/>
<line x1="557.6" y1="99.3" x2="1362.2" y2="99.3" stroke="#8e8e8e" stroke-width="0.9" />
<clipPath id="rbc"><rect x="557.6" y="48" width="300" height="22"/></clipPath>
<rect x="553.6" y="50.95" width="217.2" height="15.95" fill="url(#ob)" stroke="#e8101c" stroke-width="2.1" clip-path="url(#rbc)"/>
<line x1="557.6" y1="49.55" x2="1362.2" y2="49.55" stroke="#4a4a4a" stroke-width="0.9" />
<clipPath id="ovc"><rect x="557.6" y="49" width="804.6" height="19"/></clipPath><g clip-path="url(#ovc)">
<text x="560" y="64" font-size="12" fill="#222" textLength="6.3" lengthAdjust="spacingAndGlyphs" >0</text>
<text x="661.8" y="64" font-size="12" fill="#222" textLength="53.2" lengthAdjust="spacingAndGlyphs" >5,000,000</text>
<text x="790.6" y="64" font-size="12" fill="#222" textLength="60.4" lengthAdjust="spacingAndGlyphs" >10,000,000</text>
<text x="922.9" y="64" font-size="12" fill="#222" textLength="60.4" lengthAdjust="spacingAndGlyphs" >15,000,000</text>
<text x="1055" y="64" font-size="12" fill="#222" textLength="60.4" lengthAdjust="spacingAndGlyphs" >20,000,000</text>
<text x="1187.2" y="64" font-size="12" fill="#222" textLength="60.5" lengthAdjust="spacingAndGlyphs" >25,000,000</text>
<text x="1319.7" y="64" font-size="12" fill="#222" textLength="60.5" lengthAdjust="spacingAndGlyphs" >30,000,000</text>
</g>
<rect x="557.6" y="99.8" width="804.6" height="10.4" fill="url(#sg)" />
<line x1="557.6" y1="110.5" x2="1362.2" y2="110.5" stroke="#3c3c3c" stroke-width="1.2" />
<clipPath id="scc"><rect x="558.6" y="99.5" width="803.6" height="13.5"/></clipPath><g clip-path="url(#scc)">
<text x="555.5" y="110.6" font-size="12" fill="#222" textLength="6.3" lengthAdjust="spacingAndGlyphs" >0</text>
<text x="775.6" y="110.6" font-size="12" fill="#222" textLength="53.6" lengthAdjust="spacingAndGlyphs" >2,500,000</text>
<text x="1026.9" y="110.6" font-size="12" fill="#222" textLength="53.4" lengthAdjust="spacingAndGlyphs" >5,000,000</text>
<text x="1277.7" y="110.6" font-size="12" fill="#222" textLength="53.3" lengthAdjust="spacingAndGlyphs" >7,500,000</text>
</g>
<line x1="810.1" y1="110" x2="810.1" y2="113.2" stroke="#555" stroke-width="1" />
<line x1="1061.5" y1="110" x2="1061.5" y2="113.2" stroke="#555" stroke-width="1" />
<line x1="1312.9" y1="110" x2="1312.9" y2="113.2" stroke="#555" stroke-width="1" />
<rect x="671.3" y="73.6" width="38.4" height="21.4" rx="11.5" ry="10.7" fill="#fff" stroke="#6e6e6e" stroke-width="1.5"/>
<path d="M704.5 84.3 H679.3" stroke="#6e6e6e" stroke-width="2.4" stroke-linecap="round" fill="none"/>
<path d="M676.3 84.3 L689.8 77.7 L690.9 79.7 L685.3 84.3 L690.9 88.9 L689.8 90.9 Z" fill="#6e6e6e" stroke="#6e6e6e" stroke-width="1" stroke-linejoin="round"/>
<rect x="720.5" y="73.6" width="39.3" height="21.4" rx="11.5" ry="10.7" fill="#fff" stroke="#6e6e6e" stroke-width="1.5"/>
<path d="M726.15 84.3 H751.35" stroke="#6e6e6e" stroke-width="2.4" stroke-linecap="round" fill="none"/>
<path d="M754.35 84.3 L740.85 77.7 L739.75 79.7 L745.35 84.3 L739.75 88.9 L740.85 90.9 Z" fill="#6e6e6e" stroke="#6e6e6e" stroke-width="1" stroke-linejoin="round"/>
<line x1="804.62" y1="88.52" x2="813.4" y2="96" stroke="#6b6b6b" stroke-width="3.4" stroke-linecap="round"/>
<circle cx="798" cy="81.9" r="9.2" fill="#fff" stroke="#6b6b6b" stroke-width="3.2"/>
<line x1="792.4" y1="81.9" x2="803.6" y2="81.9" stroke="#6b6b6b" stroke-width="2.5"/>
<line x1="837.39" y1="88.29" x2="843.6" y2="94" stroke="#6b6b6b" stroke-width="2.3" stroke-linecap="round"/>
<circle cx="833" cy="83.9" r="6.1" fill="#fff" stroke="#6b6b6b" stroke-width="2.2"/>
<line x1="829" y1="83.9" x2="837" y2="83.9" stroke="#6b6b6b" stroke-width="1.1"/>
<line x1="867.48" y1="86.28" x2="873.8" y2="91.6" stroke="#6b6b6b" stroke-width="2.3" stroke-linecap="round"/>
<circle cx="862.8" cy="81.6" r="6.5" fill="#fff" stroke="#6b6b6b" stroke-width="2.2"/>
<line x1="858.8" y1="81.6" x2="866.8" y2="81.6" stroke="#6b6b6b" stroke-width="1.4"/>
<line x1="862.8" y1="77.6" x2="862.8" y2="85.6" stroke="#6b6b6b" stroke-width="1.4"/>
<line x1="897.71" y1="87.61" x2="906.8" y2="95.6" stroke="#6b6b6b" stroke-width="3.4" stroke-linecap="round"/>
<circle cx="891.3" cy="81.2" r="8.9" fill="#fff" stroke="#6b6b6b" stroke-width="3"/>
<line x1="885.7" y1="81.2" x2="896.9" y2="81.2" stroke="#6b6b6b" stroke-width="2.3"/>
<line x1="891.3" y1="75.6" x2="891.3" y2="86.8" stroke="#6b6b6b" stroke-width="2.3"/>
<rect x="926.5" y="75.5" width="51" height="17.8" fill="#fff" stroke="#b2b2b2" stroke-width="1"/>
<rect x="956.6" y="76" width="20.4" height="16.8" fill="url(#bg)" />
<line x1="956.4" y1="75.5" x2="956.4" y2="93.3" stroke="#b2b2b2" stroke-width="1" />
<path d="M963.8 82.9 h7.4 l-3.7 3.7 z" fill="#111"/>
<text x="930.6" y="88.8" font-size="12.4" fill="#333" textLength="22" lengthAdjust="spacingAndGlyphs" >chr1</text>
<rect x="981.5" y="75.5" width="216" height="17.8" fill="#fff" stroke="#b2b2b2" stroke-width="1"/>
<text x="989.3" y="88.8" font-size="12.4" fill="#333" textLength="145" lengthAdjust="spacingAndGlyphs" >chr1:1..8020085 (8.02 Mb)</text>
<rect x="1200.6" y="75.5" width="30" height="20.6" fill="#ebebeb" stroke="#cfcfcf" stroke-width="1"/>
<text x="1207.1" y="90.9" font-size="13" fill="#8a8a8a" textLength="16.1" lengthAdjust="spacingAndGlyphs" >Go</text>
<rect x="1243.6" y="75.6" width="27.7" height="19.6" fill="url(#bg)" stroke="#b4b4b4" stroke-width="1"/>
<g><rect x="1247.9" y="87" width="8.6" height="4" fill="#e3c420"/><path d="M1251.6 84.6 L1255.5 82 L1261.1 86.5 L1257.2 89.9 L1251.9 89.3 Z" fill="#d6b222"/><path d="M1253 85.2 L1255.6 83.4 L1257.4 85 L1254 87.6 Z" fill="#ecd45a"/><path d="M1259.7 77.2 L1264 77 L1263.9 82 Z" fill="#f0862a"/><g transform="rotate(42 1259.3 83)"><rect x="1254.6" y="80.4" width="9.4" height="5.2" rx="1.6" fill="#d2d2d2" stroke="#8a8a8a" stroke-width="0.7"/><rect x="1255.4" y="81.4" width="7.8" height="1.6" fill="#eeeeee"/></g></g>
<line x1="557.6" y1="24" x2="557.6" y2="771.5" stroke="#4a4a4a" stroke-width="1.4" />
<rect x="280" y="23.05" width="1083.2" height="748.95" fill="none" stroke="#e8101c" stroke-width="2.1"/>
</svg>
</body></html>
